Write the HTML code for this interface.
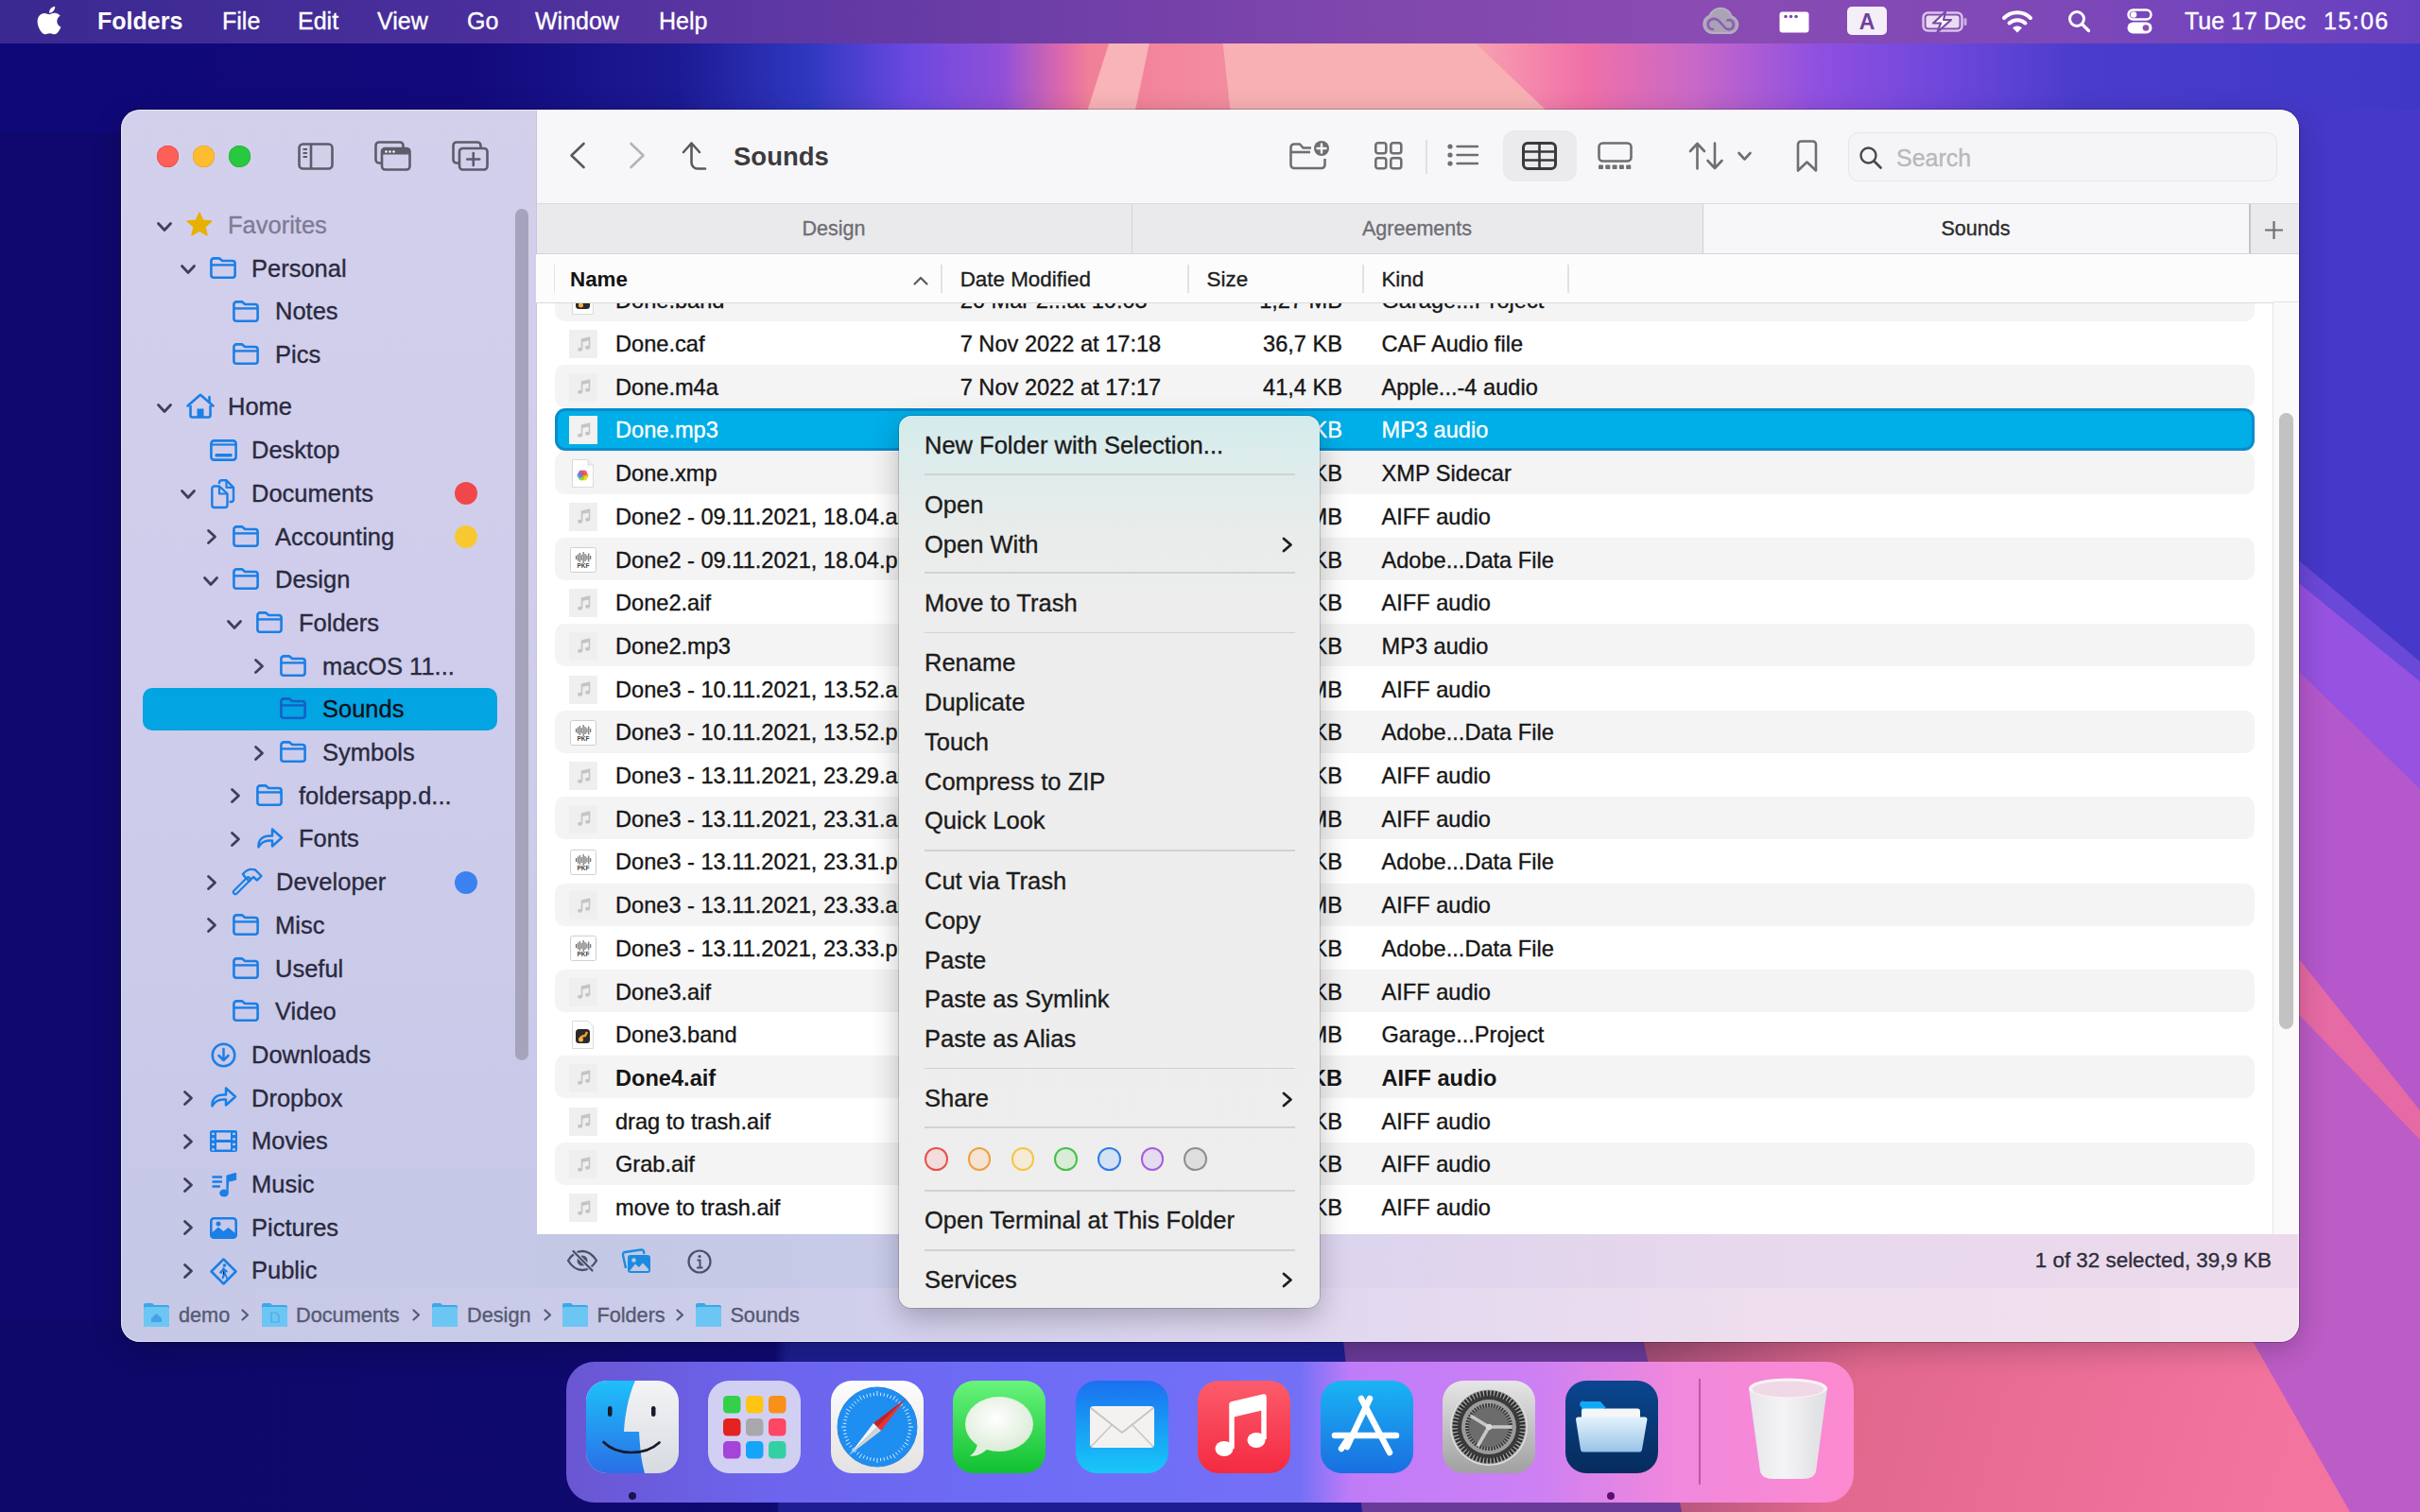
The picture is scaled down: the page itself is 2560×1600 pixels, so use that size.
<!DOCTYPE html>
<html><head><meta charset="utf-8"><style>
*{box-sizing:border-box;margin:0;padding:0}
html,body{width:2560px;height:1600px;overflow:hidden;background:#120a70;font-family:"Liberation Sans", sans-serif;position:relative}
.t{position:absolute;white-space:nowrap;line-height:1;-webkit-text-stroke:0.35px currentColor}
svg{position:absolute;overflow:visible}
</style></head>
<body>

<svg width="2560" height="1600" viewBox="0 0 2560 1600" style="left:0;top:0">
 <defs>
  <linearGradient id="wtop" x1="0" y1="0" x2="2560" y2="0" gradientUnits="userSpaceOnUse">
   <stop offset="0" stop-color="#0f0878"/>
   <stop offset="0.195" stop-color="#120a7c"/>
   <stop offset="0.28" stop-color="#1c1a94"/>
   <stop offset="0.335" stop-color="#3038c0"/>
   <stop offset="0.375" stop-color="#6a48e0"/>
   <stop offset="0.414" stop-color="#9050d8"/>
   <stop offset="0.44" stop-color="#e06aa8"/>
   <stop offset="0.45" stop-color="#f08098"/>
   <stop offset="0.51" stop-color="#f48ca0"/>
   <stop offset="0.61" stop-color="#f8a0b0"/>
   <stop offset="0.655" stop-color="#f070a8"/>
   <stop offset="0.70" stop-color="#c868c8"/>
   <stop offset="0.75" stop-color="#9050e0"/>
   <stop offset="0.80" stop-color="#7048dc"/>
   <stop offset="0.86" stop-color="#4a3ccc"/>
   <stop offset="1" stop-color="#3f38c6"/>
  </linearGradient>
  <linearGradient id="wbot" x1="0" y1="0" x2="2560" y2="0" gradientUnits="userSpaceOnUse">
   <stop offset="0" stop-color="#0e0868"/>
   <stop offset="0.32" stop-color="#0f0a70"/>
   <stop offset="0.325" stop-color="#1c1c8c"/>
   <stop offset="0.55" stop-color="#22228e"/>
  </linearGradient>
  <linearGradient id="wpink" x1="1730" y1="1420" x2="2400" y2="1600" gradientUnits="userSpaceOnUse">
   <stop offset="0" stop-color="#a04c74"/>
   <stop offset="0.35" stop-color="#e2688e"/>
   <stop offset="1" stop-color="#f474a0"/>
  </linearGradient>
  <filter id="blur1"><feGaussianBlur stdDeviation="6"/></filter>
 </defs>
 <rect x="0" y="0" width="2560" height="1600" fill="#10086e"/>
 <!-- top strip -->
 <rect x="0" y="0" width="2560" height="140" fill="url(#wtop)"/>
 <polygon points="1175,40 1217,40 1196,140 1143,140" fill="#f8b4b8"/>
 <polygon points="1293,40 1555,40 1660,140 1304,140" fill="#f8b0b4"/>
 <!-- right strip -->
 <rect x="2380" y="116" width="180" height="1484" fill="#4638c8"/>
 <polygon points="2380,550 2560,700 2560,1600 2380,1600" fill="#6a48d8"/>
 <polygon points="2380,575 2560,721 2560,1600 2380,1600" fill="#9652e0"/>
 <polygon points="2380,660 2560,835 2560,1600 2380,1600" fill="#b458cc"/>
 <polygon points="2380,950 2560,1175 2560,1600 2380,1600" fill="#e66aa4"/>
 <polygon points="2380,1020 2560,1206 2560,1600 2380,1600" fill="#bc5cc6"/>
 <!-- bottom strip -->
 <rect x="0" y="1400" width="2381" height="200" fill="url(#wbot)"/>
 <polygon points="838,1400 1419,1400 1441,1600 823,1600" fill="#1e1e90"/>
 <polygon points="1419,1400 1734,1400 1779,1600 1441,1600" fill="#6a3a98"/>
 <polygon points="1734,1400 2372,1400 2486,1600 1779,1600" fill="url(#wpink)"/>
 </svg>
<div style="position:absolute;left:0;top:0;width:2560px;height:46px;background:linear-gradient(90deg,#3a2990 0%,#4a2f9c 20%,#6a3ca6 40%,#7e46ac 55%,#8a4cb2 70%,#7e48b8 85%,#6640c0 100%)"></div><svg style="left:39px;top:6px" width="26" height="31" viewBox="0 20 384 470"><path d="M318.7 268.7c-.2-36.7 16.4-64.4 50-84.8-18.8-26.9-47.2-41.7-84.7-44.6-35.5-2.8-74.3 20.7-88.5 20.7-15 0-49.4-19.7-76.4-19.7C63.3 141.2 4 184.8 4 273.5q0 39.3 14.4 81.2c12.8 36.7 59 126.7 107.2 125.2 25.2-.6 43-17.9 75.8-17.9 31.8 0 48.3 17.9 76.4 17.9 48.6-.7 90.4-82.5 102.6-119.3-65.2-30.7-61.7-90-61.7-91.9zm-56.6-164.2c27.3-32.4 24.8-61.9 24-72.5-24.1 1.4-52 16.4-67.9 34.9-17.5 19.8-27.8 44.3-25.6 71.9 26.1 2 49.9-11.4 69.5-34.3z" fill="#fff"/></svg><div class="t" style="left:103.0px;top:9.8px;font-size:25px;color:#fff;font-weight:700;-webkit-text-stroke:0;">Folders</div><div class="t" style="left:235.0px;top:9.8px;font-size:25px;color:#fff;font-weight:400;">File</div><div class="t" style="left:315.0px;top:9.8px;font-size:25px;color:#fff;font-weight:400;">Edit</div><div class="t" style="left:399.0px;top:9.8px;font-size:25px;color:#fff;font-weight:400;">View</div><div class="t" style="left:494.0px;top:9.8px;font-size:25px;color:#fff;font-weight:400;">Go</div><div class="t" style="left:566.0px;top:9.8px;font-size:25px;color:#fff;font-weight:400;">Window</div><div class="t" style="left:697.0px;top:9.8px;font-size:25px;color:#fff;font-weight:400;">Help</div><div class="t" style="left:2311.0px;top:9.8px;font-size:25px;color:#fff;font-weight:400;">Tue 17 Dec</div><div class="t" style="left:2458.0px;top:9.8px;font-size:25px;color:#fff;font-weight:400;letter-spacing:1.4px">15:06</div><svg style="left:1801px;top:8px" width="39" height="28" viewBox="0 0 39 28"><path d="M10 27 A9.5 9.5 0 0 1 7.5 8.6 A12.5 12.5 0 0 1 31 9.5 A9 9 0 0 1 29.5 27 Z" fill="#a9a3b5" stroke="#b7afc6" stroke-width="2"/>
      <path d="M11 23 C5 23 4 15 9.5 12.5 C14 10.5 17 13.5 19.5 16.5 L23.5 21 C26 24 31 24 32.5 20 C34 16 30.5 12 26.5 13.5" fill="none" stroke="#8e5cb4" stroke-width="2.6" stroke-linecap="round"/></svg><svg style="left:1882px;top:12px" width="32" height="23" viewBox="0 0 32 23"><rect x="0.5" y="0.5" width="31" height="22" rx="3" fill="#fff"/><circle cx="7" cy="5.5" r="1.8" fill="#7a4ab0"/><circle cx="12.5" cy="5.5" r="1.8" fill="#7a4ab0"/><circle cx="18" cy="5.5" r="1.8" fill="#7a4ab0"/></svg><div style="position:absolute;left:1954px;top:7px;width:42px;height:30px;background:#f4eef8;border-radius:5px"></div><div class="t" style="left:1475.0px;width:1000px;text-align:center;top:11.5px;font-size:23px;color:#7040a0;font-weight:700;-webkit-text-stroke:0;">A</div><svg style="left:2033px;top:12px" width="49" height="22" viewBox="0 0 49 22"><rect x="1.5" y="1.5" width="41" height="19" rx="5" fill="none" stroke="#e8d8f0" stroke-width="2.5" opacity="0.85"/>
      <rect x="44.5" y="7" width="3" height="8" rx="1.5" fill="#e8d8f0" opacity="0.7"/>
      <rect x="4.5" y="4.5" width="35" height="13" rx="2.5" fill="#efe6f6" opacity="0.95"/>
      <path d="M25 0.5 L12 12.5 L20 12.5 L16.5 22 L31 9 L23 9 Z" fill="#fff" stroke="#7a48a8" stroke-width="2.2" stroke-linejoin="round"/></svg><svg style="left:2117px;top:10px" width="34" height="25" viewBox="0 0 34 25"><g fill="none" stroke="#fff" stroke-width="4" stroke-linecap="round">
      <path d="M3 9 A20 20 0 0 1 31 9"/><path d="M8.5 14.5 A12.5 12.5 0 0 1 25.5 14.5"/></g>
      <path d="M12 19.5 A7 7 0 0 1 22 19.5 L17 24.5 Z" fill="#fff"/></svg><svg style="left:2187px;top:10px" width="25" height="25" viewBox="0 0 25 25"><circle cx="10" cy="10" r="7.5" fill="none" stroke="#fff" stroke-width="3"/><path d="M15.5 15.5 L22.5 22.5" stroke="#fff" stroke-width="3.2" stroke-linecap="round"/></svg><svg style="left:2250px;top:9px" width="27" height="27" viewBox="0 0 27 27"><rect x="1.5" y="1.5" width="24" height="10" rx="5" fill="none" stroke="#fff" stroke-width="2.5"/>
      <circle cx="7" cy="6.5" r="3.3" fill="#fff"/>
      <rect x="0.5" y="14.5" width="26" height="12" rx="6" fill="#fff"/>
      <circle cx="20" cy="20.5" r="3.3" fill="#8a4cb2"/></svg><div style="position:absolute;left:128px;top:116px;width:2304px;height:1304px;border-radius:20px;box-shadow:0 8px 30px rgba(0,0,20,0.22),0 0 0 1px rgba(0,0,0,0.22)"></div><div id="win" style="position:absolute;left:128px;top:116px;width:2304px;height:1304px;border-radius:20px;overflow:hidden"><div style="position:absolute;left:0px;top:0px;width:440px;height:1247px;background:linear-gradient(180deg,#d3d0ec 0%,#cfcdeb 45%,#c6c8e8 100%)"></div><div style="position:absolute;left:0px;top:1247px;width:2304px;height:57px;background:linear-gradient(90deg,#c6c8e6 0%,#cacce9 25%,#ddd6f0 50%,#eedeee 75%,#f2e2ef 100%)"></div><div style="position:absolute;left:439px;top:1190px;width:1865px;height:57px;background:linear-gradient(90deg,#c3c8e5 0%,#cacbe9 30%,#dcd4ee 45%,#e8d8ec 70%,#ecdaec 100%)"></div><div style="position:absolute;left:439px;top:0px;width:1865px;height:100px;background:#f7f7f9;border-bottom:1px solid #dcdcde"></div><div style="position:absolute;left:439px;top:100px;width:1865px;height:53px;background:#eaeaed;border-bottom:1px solid #d6d6d8"></div><div style="position:absolute;left:1673px;top:100px;width:579px;height:52px;background:#f7f7f9"></div><div style="position:absolute;left:1069px;top:100px;width:1px;height:52px;background:#d4d4d6"></div><div style="position:absolute;left:1673px;top:100px;width:1px;height:52px;background:#d0d0d2"></div><div style="position:absolute;left:2251px;top:100px;width:2px;height:52px;background:#c4c4c6"></div><div style="position:absolute;left:439px;top:153px;width:1865px;height:51px;background:#fcfcfc;border-bottom:1px solid #e4e4e6"></div><div style="position:absolute;left:439px;top:204px;width:1865px;height:986px;background:#ffffff"></div><div style="position:absolute;left:2276px;top:204px;width:28px;height:986px;background:#fafafa;border-left:1px solid #e6e6e6"></div><div style="position:absolute;left:2283px;top:321px;width:15px;height:652px;background:#c2c2c2;border-radius:8px"></div><div style="position:absolute;left:439px;top:0px;width:1px;height:1190px;background:#c8c4dc"></div></div><div style="position:absolute;left:128px;top:116px;width:2304px;height:1304px;border-radius:20px;box-shadow:inset 0 0 0 1px rgba(255,255,255,0.45);pointer-events:none"></div><div style="position:absolute;left:165.5px;top:153.5px;width:23px;height:23px;border-radius:50%;background:#fe5f57;box-shadow:inset 0 0 0 0.5px #e0443e"></div><div style="position:absolute;left:203.5px;top:153.5px;width:23px;height:23px;border-radius:50%;background:#febc2e;box-shadow:inset 0 0 0 0.5px #dea123"></div><div style="position:absolute;left:241.5px;top:153.5px;width:23px;height:23px;border-radius:50%;background:#28c840;box-shadow:inset 0 0 0 0.5px #1aab29"></div><svg style="left:315px;top:151px" width="38" height="29" viewBox="0 0 38 29"><rect x="1.5" y="1.5" width="35" height="26" rx="4" fill="none" stroke="#5c5c6a" stroke-width="2.6"/>
      <path d="M14 1.5 V27.5" stroke="#5c5c6a" stroke-width="2.6"/>
      <path d="M5.5 7 H10 M5.5 11 H10 M5.5 15 H10" stroke="#5c5c6a" stroke-width="2"/></svg><svg style="left:395px;top:149px" width="40" height="32" viewBox="0 0 40 32"><path d="M9 23.5 H6 A3.5 3.5 0 0 1 2.5 20 V5 A3.5 3.5 0 0 1 6 1.5 H28 A3.5 3.5 0 0 1 31.5 5 V8" fill="none" stroke="#5c5c6a" stroke-width="2.6"/>
      <rect x="9" y="8" width="29.5" height="22.5" rx="3.5" fill="none" stroke="#5c5c6a" stroke-width="2.6"/>
      <path d="M9 12 A3.5 3.5 0 0 1 12.5 8.5 H35 A3.5 3.5 0 0 1 38.5 12 V14.5 H9 Z" fill="#5c5c6a"/>
      <circle cx="13.5" cy="11.5" r="1.3" fill="#f7f7f9"/><circle cx="17.5" cy="11.5" r="1.3" fill="#f7f7f9"/><circle cx="21.5" cy="11.5" r="1.3" fill="#f7f7f9"/></svg><svg style="left:477px;top:149px" width="40" height="32" viewBox="0 0 40 32"><path d="M9 23.5 H6 A3.5 3.5 0 0 1 2.5 20 V5 A3.5 3.5 0 0 1 6 1.5 H28 A3.5 3.5 0 0 1 31.5 5 V8" fill="none" stroke="#5c5c6a" stroke-width="2.6"/>
      <rect x="9" y="8" width="29.5" height="22.5" rx="3.5" fill="none" stroke="#5c5c6a" stroke-width="2.6"/>
      <path d="M23.75 13 V26 M17.25 19.5 H30.25" stroke="#5c5c6a" stroke-width="2.6" stroke-linecap="round"/></svg><svg style="left:601px;top:150px" width="20" height="30" viewBox="0 0 20 30"><path d="M16.5 2 L3.5 14.5 L16.5 27" fill="none" stroke="#5a5a5e" stroke-width="2.6" stroke-linecap="round" stroke-linejoin="round"/></svg><svg style="left:664px;top:150px" width="20" height="30" viewBox="0 0 20 30"><path d="M3.5 2 L16.5 14.5 L3.5 27" fill="none" stroke="#b4b4b8" stroke-width="2.6" stroke-linecap="round" stroke-linejoin="round"/></svg><svg style="left:721px;top:149px" width="28" height="32" viewBox="0 0 28 32"><path d="M2 12 L10.5 2.5 L19 12 M10.5 3 V23 A6.5 6.5 0 0 0 17 29.5 H25" fill="none" stroke="#5a5a5e" stroke-width="2.6" stroke-linecap="round" stroke-linejoin="round"/></svg><div class="t" style="left:776.0px;top:152.2px;font-size:27.5px;color:#3b3b3e;font-weight:700;-webkit-text-stroke:0;">Sounds</div><svg style="left:1364px;top:149px" width="44" height="31" viewBox="0 0 44 31"><path d="M23 7.5 H14.5 L11 3.5 H5 A3.5 3.5 0 0 0 1.5 7 V25.5 A3.5 3.5 0 0 0 5 29 H34 A3.5 3.5 0 0 0 37.5 25.5 V19" fill="none" stroke="#6e6e73" stroke-width="2.6" stroke-linejoin="round"/>
      <path d="M1.5 12 H22" stroke="#6e6e73" stroke-width="2.6"/>
      <circle cx="34" cy="8" r="8" fill="#6e6e73"/><path d="M34 3.5 V12.5 M29.5 8 H38.5" stroke="#f7f7f9" stroke-width="2.4" stroke-linecap="round"/></svg><svg style="left:1454px;top:150px" width="30" height="30" viewBox="0 0 30 30"><g fill="none" stroke="#6e6e73" stroke-width="2.6"><rect x="1.3" y="1.3" width="11" height="11" rx="2.5"/><rect x="17.3" y="1.3" width="11" height="11" rx="2.5"/><rect x="1.3" y="17.3" width="11" height="11" rx="2.5"/><rect x="17.3" y="17.3" width="11" height="11" rx="2.5"/></g></svg><div style="position:absolute;left:1508px;top:148px;width:1.5px;height:36px;background:#e0e0e2"></div><svg style="left:1531px;top:152px" width="34" height="24" viewBox="0 0 34 24"><g fill="#6e6e73"><circle cx="3" cy="3" r="2.6"/><circle cx="3" cy="12" r="2.6"/><circle cx="3" cy="21" r="2.6"/></g>
      <path d="M10.5 3 H32 M10.5 12 H32 M10.5 21 H32" stroke="#6e6e73" stroke-width="2.4" stroke-linecap="round"/></svg><div style="position:absolute;left:1590px;top:138px;width:78px;height:54px;background:#ebebed;border-radius:12px"></div><svg style="left:1610px;top:150px" width="37" height="30" viewBox="0 0 37 30"><rect x="1.5" y="1.5" width="34" height="27" rx="4.5" fill="none" stroke="#3a3a3c" stroke-width="3"/>
      <path d="M1.5 10.5 H35.5 M1.5 19.5 H35.5 M18.5 1.5 V28.5" stroke="#3a3a3c" stroke-width="2.6"/></svg><svg style="left:1690px;top:150px" width="37" height="30" viewBox="0 0 37 30"><rect x="1.5" y="1.5" width="34" height="19" rx="4" fill="none" stroke="#6e6e73" stroke-width="2.6"/>
      <g fill="#6e6e73"><rect x="1" y="24.5" width="5" height="4.5" rx="0.8"/><rect x="8.3" y="24.5" width="5" height="4.5" rx="0.8"/><rect x="15.6" y="24.5" width="5" height="4.5" rx="0.8"/><rect x="22.9" y="24.5" width="5" height="4.5" rx="0.8"/><rect x="30.2" y="24.5" width="5" height="4.5" rx="0.8"/></g></svg><svg style="left:1786px;top:150px" width="38" height="30" viewBox="0 0 38 30"><path d="M9.5 28.5 V2.5 M2 10 L9.5 2 L17 10 M28 1.5 V27.5 M20.5 20 L28 28 L35.5 20" fill="none" stroke="#6e6e73" stroke-width="2.6" stroke-linecap="round" stroke-linejoin="round"/></svg><svg style="left:1838px;top:160px" width="15" height="11" viewBox="0 0 15 11"><path d="M1.5 2 L7.5 8.5 L13.5 2" fill="none" stroke="#6e6e73" stroke-width="2.6" stroke-linecap="round" stroke-linejoin="round"/></svg><svg style="left:1900px;top:148px" width="23" height="35" viewBox="0 0 23 35"><path d="M2 32.5 V5 A3.5 3.5 0 0 1 5.5 1.5 H17.5 A3.5 3.5 0 0 1 21 5 V32.5 L11.5 23.5 Z" fill="none" stroke="#6e6e73" stroke-width="2.6" stroke-linejoin="round"/></svg><div style="position:absolute;left:1955px;top:140px;width:454px;height:52px;background:#f5f5f7;border:1px solid #e6e6e8;border-radius:11px"></div><svg style="left:1966px;top:154px" width="26" height="26" viewBox="0 0 26 26"><circle cx="10.5" cy="10.5" r="8" fill="none" stroke="#4a4a4e" stroke-width="2.4"/><path d="M16.5 16.5 L23.5 23.5" stroke="#4a4a4e" stroke-width="2.8" stroke-linecap="round"/></svg><div class="t" style="left:2006.0px;top:155.3px;font-size:25px;color:#b8b8bc;font-weight:400;">Search</div><div class="t" style="left:382.0px;width:1000px;text-align:center;top:231.8px;font-size:21.5px;color:#6e6e73;font-weight:400;">Design</div><div class="t" style="left:999.0px;width:1000px;text-align:center;top:231.8px;font-size:21.5px;color:#6e6e73;font-weight:400;">Agreements</div><div class="t" style="left:1590.0px;width:1000px;text-align:center;top:231.8px;font-size:21.5px;color:#2a2a2c;font-weight:400;">Sounds</div><svg style="left:2395px;top:233px" width="21" height="21" viewBox="0 0 21 21"><path d="M10.5 1 V20 M1 10.5 H20" stroke="#6e6e73" stroke-width="2.2"/></svg><svg style="left:165.5px;top:234.6px" width="16" height="11" viewBox="0 0 16 11"><path d="M1.5 1.5 L8 8.5 L14.5 1.5" fill="none" stroke="#3f3f5a" stroke-width="2.8" stroke-linecap="round" stroke-linejoin="round"/></svg><svg style="left:197px;top:224.1px" width="28" height="27" viewBox="0 0 28 27"><path d="M14 1.2 L17.6 9.3 L26.6 10.1 L19.8 16 L21.9 24.8 L14 20.1 L6.1 24.8 L8.2 16 L1.4 10.1 L10.4 9.3 Z" fill="#e8b000" stroke="#e8b000" stroke-width="1.6" stroke-linejoin="round"/></svg><div class="t" style="left:241.0px;top:226.0px;font-size:25.5px;color:#7c7c94;font-weight:400;">Favorites</div><svg style="left:190.5px;top:280.3px" width="16" height="11" viewBox="0 0 16 11"><path d="M1.5 1.5 L8 8.5 L14.5 1.5" fill="none" stroke="#3f3f5a" stroke-width="2.8" stroke-linecap="round" stroke-linejoin="round"/></svg><svg style="left:222px;top:271.8px" width="28" height="23" viewBox="0 0 28 23"><path d="M1.4 19 V4.2 A2.8 2.8 0 0 1 4.2 1.4 H10.2 L13.2 4 H23.8 A2.8 2.8 0 0 1 26.6 6.8 V19 A2.8 2.8 0 0 1 23.8 21.8 H4.2 A2.8 2.8 0 0 1 1.4 19 Z" fill="none" stroke="#1a7fe6" stroke-width="2.6" stroke-linejoin="round"/>
      <path d="M1.4 8.4 H26.6" stroke="#1a7fe6" stroke-width="2.4"/></svg><div class="t" style="left:266.0px;top:271.7px;font-size:25.5px;color:#2a2a3e;font-weight:400;">Personal</div><svg style="left:246px;top:317.5px" width="28" height="23" viewBox="0 0 28 23"><path d="M1.4 19 V4.2 A2.8 2.8 0 0 1 4.2 1.4 H10.2 L13.2 4 H23.8 A2.8 2.8 0 0 1 26.6 6.8 V19 A2.8 2.8 0 0 1 23.8 21.8 H4.2 A2.8 2.8 0 0 1 1.4 19 Z" fill="none" stroke="#1a7fe6" stroke-width="2.6" stroke-linejoin="round"/>
      <path d="M1.4 8.4 H26.6" stroke="#1a7fe6" stroke-width="2.4"/></svg><div class="t" style="left:291.0px;top:317.4px;font-size:25.5px;color:#2a2a3e;font-weight:400;">Notes</div><svg style="left:246px;top:363.2px" width="28" height="23" viewBox="0 0 28 23"><path d="M1.4 19 V4.2 A2.8 2.8 0 0 1 4.2 1.4 H10.2 L13.2 4 H23.8 A2.8 2.8 0 0 1 26.6 6.8 V19 A2.8 2.8 0 0 1 23.8 21.8 H4.2 A2.8 2.8 0 0 1 1.4 19 Z" fill="none" stroke="#1a7fe6" stroke-width="2.6" stroke-linejoin="round"/>
      <path d="M1.4 8.4 H26.6" stroke="#1a7fe6" stroke-width="2.4"/></svg><div class="t" style="left:291.0px;top:363.1px;font-size:25.5px;color:#2a2a3e;font-weight:400;">Pics</div><svg style="left:165.5px;top:427.0px" width="16" height="11" viewBox="0 0 16 11"><path d="M1.5 1.5 L8 8.5 L14.5 1.5" fill="none" stroke="#3f3f5a" stroke-width="2.8" stroke-linecap="round" stroke-linejoin="round"/></svg><svg style="left:197px;top:416.0px" width="30" height="27" viewBox="0 0 30 27"><path d="M4.5 13 V23.5 A2 2 0 0 0 6.5 25.5 H23.5 A2 2 0 0 0 25.5 23.5 V13" fill="none" stroke="#1a7fe6" stroke-width="2.6" stroke-linejoin="round"/>
      <path d="M1.5 13.5 L15 1.8 L28.5 13.5" fill="none" stroke="#1a7fe6" stroke-width="2.6" stroke-linecap="round" stroke-linejoin="round"/>
      <path d="M24.5 9 V4" stroke="#1a7fe6" stroke-width="2.6" stroke-linecap="round"/>
      <rect x="11.5" y="16.5" width="7" height="9" fill="#1a7fe6"/></svg><div class="t" style="left:241.0px;top:418.4px;font-size:25.5px;color:#2a2a3e;font-weight:400;">Home</div><svg style="left:222px;top:465.2px" width="29" height="23" viewBox="0 0 29 23"><rect x="1.4" y="1.4" width="26.2" height="20.2" rx="3" fill="none" stroke="#1a7fe6" stroke-width="2.6"/>
      <path d="M1.4 5.5 H27.6" stroke="#1a7fe6" stroke-width="2.2"/>
      <rect x="5.5" y="15" width="18" height="3.6" rx="1" fill="#1a7fe6"/></svg><div class="t" style="left:266.0px;top:464.1px;font-size:25.5px;color:#2a2a3e;font-weight:400;">Desktop</div><svg style="left:190.5px;top:518.4000000000001px" width="16" height="11" viewBox="0 0 16 11"><path d="M1.5 1.5 L8 8.5 L14.5 1.5" fill="none" stroke="#3f3f5a" stroke-width="2.8" stroke-linecap="round" stroke-linejoin="round"/></svg><svg style="left:223px;top:506.9000000000001px" width="26" height="31" viewBox="0 0 26 31"><path d="M9 5 V3.5 A2.5 2.5 0 0 1 11.5 1.3 H16.5 L24 8.8 V21.5 A2.5 2.5 0 0 1 21.5 24 H19.5" fill="none" stroke="#1a7fe6" stroke-width="2.4" stroke-linejoin="round"/>
      <path d="M16.5 1.3 V8.8 H24" fill="none" stroke="#1a7fe6" stroke-width="2.2" stroke-linejoin="round"/>
      <path d="M1.3 10 A2.5 2.5 0 0 1 3.8 7.5 H9 L17.5 15.5 V27.5 A2.5 2.5 0 0 1 15 30 H3.8 A2.5 2.5 0 0 1 1.3 27.5 Z" fill="#d2cfec" stroke="#1a7fe6" stroke-width="2.4" stroke-linejoin="round"/>
      <path d="M9 7.5 V15.5 H17.5" fill="none" stroke="#1a7fe6" stroke-width="2.2" stroke-linejoin="round"/></svg><div class="t" style="left:266.0px;top:509.8px;font-size:25.5px;color:#2a2a3e;font-weight:400;">Documents</div><div style="position:absolute;left:481px;top:510.4000000000001px;width:24px;height:24px;border-radius:50%;background:#f0484a"></div><svg style="left:218.5px;top:560.1000000000001px" width="11" height="16" viewBox="0 0 11 16"><path d="M1.5 1.5 L8.5 8 L1.5 14.5" fill="none" stroke="#3f3f5a" stroke-width="2.8" stroke-linecap="round" stroke-linejoin="round"/></svg><svg style="left:246px;top:555.6000000000001px" width="28" height="23" viewBox="0 0 28 23"><path d="M1.4 19 V4.2 A2.8 2.8 0 0 1 4.2 1.4 H10.2 L13.2 4 H23.8 A2.8 2.8 0 0 1 26.6 6.8 V19 A2.8 2.8 0 0 1 23.8 21.8 H4.2 A2.8 2.8 0 0 1 1.4 19 Z" fill="none" stroke="#1a7fe6" stroke-width="2.6" stroke-linejoin="round"/>
      <path d="M1.4 8.4 H26.6" stroke="#1a7fe6" stroke-width="2.4"/></svg><div class="t" style="left:291.0px;top:555.5px;font-size:25.5px;color:#2a2a3e;font-weight:400;">Accounting</div><div style="position:absolute;left:481px;top:556.1000000000001px;width:24px;height:24px;border-radius:50%;background:#f8c832"></div><svg style="left:215px;top:609.8000000000001px" width="16" height="11" viewBox="0 0 16 11"><path d="M1.5 1.5 L8 8.5 L14.5 1.5" fill="none" stroke="#3f3f5a" stroke-width="2.8" stroke-linecap="round" stroke-linejoin="round"/></svg><svg style="left:246px;top:601.3000000000001px" width="28" height="23" viewBox="0 0 28 23"><path d="M1.4 19 V4.2 A2.8 2.8 0 0 1 4.2 1.4 H10.2 L13.2 4 H23.8 A2.8 2.8 0 0 1 26.6 6.8 V19 A2.8 2.8 0 0 1 23.8 21.8 H4.2 A2.8 2.8 0 0 1 1.4 19 Z" fill="none" stroke="#1a7fe6" stroke-width="2.6" stroke-linejoin="round"/>
      <path d="M1.4 8.4 H26.6" stroke="#1a7fe6" stroke-width="2.4"/></svg><div class="t" style="left:291.0px;top:601.2px;font-size:25.5px;color:#2a2a3e;font-weight:400;">Design</div><svg style="left:240px;top:655.5px" width="16" height="11" viewBox="0 0 16 11"><path d="M1.5 1.5 L8 8.5 L14.5 1.5" fill="none" stroke="#3f3f5a" stroke-width="2.8" stroke-linecap="round" stroke-linejoin="round"/></svg><svg style="left:271px;top:647.0px" width="28" height="23" viewBox="0 0 28 23"><path d="M1.4 19 V4.2 A2.8 2.8 0 0 1 4.2 1.4 H10.2 L13.2 4 H23.8 A2.8 2.8 0 0 1 26.6 6.8 V19 A2.8 2.8 0 0 1 23.8 21.8 H4.2 A2.8 2.8 0 0 1 1.4 19 Z" fill="none" stroke="#1a7fe6" stroke-width="2.6" stroke-linejoin="round"/>
      <path d="M1.4 8.4 H26.6" stroke="#1a7fe6" stroke-width="2.4"/></svg><div class="t" style="left:316.0px;top:646.9px;font-size:25.5px;color:#2a2a3e;font-weight:400;">Folders</div><svg style="left:268.5px;top:697.2px" width="11" height="16" viewBox="0 0 11 16"><path d="M1.5 1.5 L8.5 8 L1.5 14.5" fill="none" stroke="#3f3f5a" stroke-width="2.8" stroke-linecap="round" stroke-linejoin="round"/></svg><svg style="left:296px;top:692.7px" width="28" height="23" viewBox="0 0 28 23"><path d="M1.4 19 V4.2 A2.8 2.8 0 0 1 4.2 1.4 H10.2 L13.2 4 H23.8 A2.8 2.8 0 0 1 26.6 6.8 V19 A2.8 2.8 0 0 1 23.8 21.8 H4.2 A2.8 2.8 0 0 1 1.4 19 Z" fill="none" stroke="#1a7fe6" stroke-width="2.6" stroke-linejoin="round"/>
      <path d="M1.4 8.4 H26.6" stroke="#1a7fe6" stroke-width="2.4"/></svg><div class="t" style="left:341.0px;top:692.6px;font-size:25.5px;color:#2a2a3e;font-weight:400;">macOS 11...</div><div style="position:absolute;left:150.5px;top:728.4000000000001px;width:375px;height:45px;background:#02a4e2;border-radius:10px"></div><svg style="left:296px;top:738.4000000000001px" width="28" height="23" viewBox="0 0 28 23"><path d="M1.4 19 V4.2 A2.8 2.8 0 0 1 4.2 1.4 H10.2 L13.2 4 H23.8 A2.8 2.8 0 0 1 26.6 6.8 V19 A2.8 2.8 0 0 1 23.8 21.8 H4.2 A2.8 2.8 0 0 1 1.4 19 Z" fill="none" stroke="#1560c8" stroke-width="2.6" stroke-linejoin="round"/>
      <path d="M1.4 8.4 H26.6" stroke="#1560c8" stroke-width="2.4"/></svg><div class="t" style="left:341.0px;top:738.3px;font-size:25.5px;color:#101018;font-weight:400;">Sounds</div><svg style="left:268.5px;top:788.6000000000001px" width="11" height="16" viewBox="0 0 11 16"><path d="M1.5 1.5 L8.5 8 L1.5 14.5" fill="none" stroke="#3f3f5a" stroke-width="2.8" stroke-linecap="round" stroke-linejoin="round"/></svg><svg style="left:296px;top:784.1000000000001px" width="28" height="23" viewBox="0 0 28 23"><path d="M1.4 19 V4.2 A2.8 2.8 0 0 1 4.2 1.4 H10.2 L13.2 4 H23.8 A2.8 2.8 0 0 1 26.6 6.8 V19 A2.8 2.8 0 0 1 23.8 21.8 H4.2 A2.8 2.8 0 0 1 1.4 19 Z" fill="none" stroke="#1a7fe6" stroke-width="2.6" stroke-linejoin="round"/>
      <path d="M1.4 8.4 H26.6" stroke="#1a7fe6" stroke-width="2.4"/></svg><div class="t" style="left:341.0px;top:784.0px;font-size:25.5px;color:#2a2a3e;font-weight:400;">Symbols</div><svg style="left:243.5px;top:834.3000000000001px" width="11" height="16" viewBox="0 0 11 16"><path d="M1.5 1.5 L8.5 8 L1.5 14.5" fill="none" stroke="#3f3f5a" stroke-width="2.8" stroke-linecap="round" stroke-linejoin="round"/></svg><svg style="left:271px;top:829.8000000000001px" width="28" height="23" viewBox="0 0 28 23"><path d="M1.4 19 V4.2 A2.8 2.8 0 0 1 4.2 1.4 H10.2 L13.2 4 H23.8 A2.8 2.8 0 0 1 26.6 6.8 V19 A2.8 2.8 0 0 1 23.8 21.8 H4.2 A2.8 2.8 0 0 1 1.4 19 Z" fill="none" stroke="#1a7fe6" stroke-width="2.6" stroke-linejoin="round"/>
      <path d="M1.4 8.4 H26.6" stroke="#1a7fe6" stroke-width="2.4"/></svg><div class="t" style="left:316.0px;top:829.7px;font-size:25.5px;color:#2a2a3e;font-weight:400;">foldersapp.d...</div><svg style="left:243.5px;top:880.0px" width="11" height="16" viewBox="0 0 11 16"><path d="M1.5 1.5 L8.5 8 L1.5 14.5" fill="none" stroke="#3f3f5a" stroke-width="2.8" stroke-linecap="round" stroke-linejoin="round"/></svg><svg style="left:271px;top:874.0px" width="29" height="25" viewBox="0 0 29 25"><path d="M2.5 22.5 C2 14 7 10.5 15 10.5 H17 V3.5 L27 12.5 L17 21.5 V15.5 H14 C8.5 15.5 5 18 2.5 22.5 Z" fill="none" stroke="#1a7fe6" stroke-width="2.5" stroke-linejoin="round"/></svg><div class="t" style="left:316.0px;top:875.4px;font-size:25.5px;color:#2a2a3e;font-weight:400;">Fonts</div><svg style="left:218.5px;top:925.7px" width="11" height="16" viewBox="0 0 11 16"><path d="M1.5 1.5 L8.5 8 L1.5 14.5" fill="none" stroke="#3f3f5a" stroke-width="2.8" stroke-linecap="round" stroke-linejoin="round"/></svg><svg style="left:246px;top:918.2px" width="32" height="29" viewBox="0 0 32 29"><path d="M3 26 L16.5 12.5" stroke="#1a7fe6" stroke-width="6.5" stroke-linecap="round"/>
      <path d="M3 26 L16.5 12.5" stroke="#d0cdea" stroke-width="2" stroke-linecap="round"/>
      <path d="M11 7 C14 3 19 1 24 2.5 L30.5 9 L26 13.5 L22 10 L17.5 14.5 L13.5 10.5 Z" fill="none" stroke="#1a7fe6" stroke-width="2.4" stroke-linejoin="round"/></svg><div class="t" style="left:292.0px;top:921.1px;font-size:25.5px;color:#2a2a3e;font-weight:400;">Developer</div><div style="position:absolute;left:481px;top:921.7px;width:24px;height:24px;border-radius:50%;background:#3b82f0"></div><svg style="left:218.5px;top:971.4000000000001px" width="11" height="16" viewBox="0 0 11 16"><path d="M1.5 1.5 L8.5 8 L1.5 14.5" fill="none" stroke="#3f3f5a" stroke-width="2.8" stroke-linecap="round" stroke-linejoin="round"/></svg><svg style="left:246px;top:966.9000000000001px" width="28" height="23" viewBox="0 0 28 23"><path d="M1.4 19 V4.2 A2.8 2.8 0 0 1 4.2 1.4 H10.2 L13.2 4 H23.8 A2.8 2.8 0 0 1 26.6 6.8 V19 A2.8 2.8 0 0 1 23.8 21.8 H4.2 A2.8 2.8 0 0 1 1.4 19 Z" fill="none" stroke="#1a7fe6" stroke-width="2.6" stroke-linejoin="round"/>
      <path d="M1.4 8.4 H26.6" stroke="#1a7fe6" stroke-width="2.4"/></svg><div class="t" style="left:291.0px;top:966.8px;font-size:25.5px;color:#2a2a3e;font-weight:400;">Misc</div><svg style="left:246px;top:1012.6000000000001px" width="28" height="23" viewBox="0 0 28 23"><path d="M1.4 19 V4.2 A2.8 2.8 0 0 1 4.2 1.4 H10.2 L13.2 4 H23.8 A2.8 2.8 0 0 1 26.6 6.8 V19 A2.8 2.8 0 0 1 23.8 21.8 H4.2 A2.8 2.8 0 0 1 1.4 19 Z" fill="none" stroke="#1a7fe6" stroke-width="2.6" stroke-linejoin="round"/>
      <path d="M1.4 8.4 H26.6" stroke="#1a7fe6" stroke-width="2.4"/></svg><div class="t" style="left:291.0px;top:1012.5px;font-size:25.5px;color:#2a2a3e;font-weight:400;">Useful</div><svg style="left:246px;top:1058.3000000000002px" width="28" height="23" viewBox="0 0 28 23"><path d="M1.4 19 V4.2 A2.8 2.8 0 0 1 4.2 1.4 H10.2 L13.2 4 H23.8 A2.8 2.8 0 0 1 26.6 6.8 V19 A2.8 2.8 0 0 1 23.8 21.8 H4.2 A2.8 2.8 0 0 1 1.4 19 Z" fill="none" stroke="#1a7fe6" stroke-width="2.6" stroke-linejoin="round"/>
      <path d="M1.4 8.4 H26.6" stroke="#1a7fe6" stroke-width="2.4"/></svg><div class="t" style="left:291.0px;top:1058.2px;font-size:25.5px;color:#2a2a3e;font-weight:400;">Video</div><svg style="left:223px;top:1103.0px" width="27" height="27" viewBox="0 0 27 27"><circle cx="13.5" cy="13.5" r="11.8" fill="none" stroke="#1a7fe6" stroke-width="2.5"/>
      <path d="M13.5 7 V19 M8.5 14 L13.5 19 L18.5 14" fill="none" stroke="#1a7fe6" stroke-width="2.5" stroke-linecap="round" stroke-linejoin="round"/></svg><div class="t" style="left:266.0px;top:1103.9px;font-size:25.5px;color:#2a2a3e;font-weight:400;">Downloads</div><svg style="left:194.0px;top:1154.2px" width="11" height="16" viewBox="0 0 11 16"><path d="M1.5 1.5 L8.5 8 L1.5 14.5" fill="none" stroke="#3f3f5a" stroke-width="2.8" stroke-linecap="round" stroke-linejoin="round"/></svg><svg style="left:222px;top:1148.2px" width="29" height="25" viewBox="0 0 29 25"><path d="M2.5 22.5 C2 14 7 10.5 15 10.5 H17 V3.5 L27 12.5 L17 21.5 V15.5 H14 C8.5 15.5 5 18 2.5 22.5 Z" fill="none" stroke="#1a7fe6" stroke-width="2.5" stroke-linejoin="round"/></svg><div class="t" style="left:266.0px;top:1149.6px;font-size:25.5px;color:#2a2a3e;font-weight:400;">Dropbox</div><svg style="left:194.0px;top:1199.9px" width="11" height="16" viewBox="0 0 11 16"><path d="M1.5 1.5 L8.5 8 L1.5 14.5" fill="none" stroke="#3f3f5a" stroke-width="2.8" stroke-linecap="round" stroke-linejoin="round"/></svg><svg style="left:222px;top:1196.4px" width="29" height="23" viewBox="0 0 29 23"><rect x="0" y="0" width="29" height="23" rx="2.5" fill="#1a7fe6"/><rect x="7" y="2.5" width="15" height="7.5" fill="#cbcbe9"/><rect x="7" y="13" width="15" height="7.5" fill="#cbcbe9"/><rect x="2.2" y="2.8" width="2.6" height="2.2" fill="#cbcbe9"/><rect x="24.2" y="2.8" width="2.6" height="2.2" fill="#cbcbe9"/><rect x="2.2" y="8.3" width="2.6" height="2.2" fill="#cbcbe9"/><rect x="24.2" y="8.3" width="2.6" height="2.2" fill="#cbcbe9"/><rect x="2.2" y="13.8" width="2.6" height="2.2" fill="#cbcbe9"/><rect x="24.2" y="13.8" width="2.6" height="2.2" fill="#cbcbe9"/><rect x="2.2" y="19.3" width="2.6" height="2.2" fill="#cbcbe9"/><rect x="24.2" y="19.3" width="2.6" height="2.2" fill="#cbcbe9"/></svg><div class="t" style="left:266.0px;top:1195.3px;font-size:25.5px;color:#2a2a3e;font-weight:400;">Movies</div><svg style="left:194.0px;top:1245.6000000000001px" width="11" height="16" viewBox="0 0 11 16"><path d="M1.5 1.5 L8.5 8 L1.5 14.5" fill="none" stroke="#3f3f5a" stroke-width="2.8" stroke-linecap="round" stroke-linejoin="round"/></svg><svg style="left:223px;top:1240.6000000000001px" width="27" height="26" viewBox="0 0 27 26"><path d="M1.5 4.5 H12 M1.5 9.5 H12 M1.5 14.5 H10" stroke="#1a7fe6" stroke-width="2.3"/>
      <path d="M17.5 21 V3.5 L26 1.2 V6.8 L19.5 8.5" fill="#1a7fe6" stroke="#1a7fe6" stroke-width="2.3" stroke-linejoin="round"/>
      <ellipse cx="14" cy="21.5" rx="4.8" ry="4" fill="#1a7fe6"/></svg><div class="t" style="left:266.0px;top:1241.0px;font-size:25.5px;color:#2a2a3e;font-weight:400;">Music</div><svg style="left:194.0px;top:1291.3000000000002px" width="11" height="16" viewBox="0 0 11 16"><path d="M1.5 1.5 L8.5 8 L1.5 14.5" fill="none" stroke="#3f3f5a" stroke-width="2.8" stroke-linecap="round" stroke-linejoin="round"/></svg><svg style="left:222px;top:1287.8000000000002px" width="29" height="23" viewBox="0 0 29 23"><rect x="1.3" y="1.3" width="26.4" height="20.4" rx="3" fill="none" stroke="#1a7fe6" stroke-width="2.6"/>
      <path d="M1.5 20 L1.5 17 L9 10.5 L14.5 15 L19.5 11 L27.5 17.5 V20 A2 2 0 0 1 25.5 22 H3.5 Z" fill="#1a7fe6"/>
      <circle cx="9" cy="7" r="2.5" fill="#1a7fe6"/></svg><div class="t" style="left:266.0px;top:1286.7px;font-size:25.5px;color:#2a2a3e;font-weight:400;">Pictures</div><svg style="left:194.0px;top:1337.0px" width="11" height="16" viewBox="0 0 11 16"><path d="M1.5 1.5 L8.5 8 L1.5 14.5" fill="none" stroke="#3f3f5a" stroke-width="2.8" stroke-linecap="round" stroke-linejoin="round"/></svg><svg style="left:222px;top:1330.5px" width="29" height="29" viewBox="0 0 29 29"><path d="M14.5 1.5 L27.5 14.5 L14.5 27.5 L1.5 14.5 Z" fill="none" stroke="#1a7fe6" stroke-width="2.5" stroke-linejoin="round"/>
      <circle cx="15.5" cy="8" r="1.8" fill="#1a7fe6"/>
      <path d="M14.5 11 L12 16 M14.5 11 L16 16.5 L13.5 21.5 M16 16.5 L18 21.5 M13.5 13 L11 15.5 M15 12 L18 14.5" stroke="#1a7fe6" stroke-width="1.8" stroke-linecap="round"/></svg><div class="t" style="left:266.0px;top:1332.4px;font-size:25.5px;color:#2a2a3e;font-weight:400;">Public</div><div style="position:absolute;left:545px;top:221px;width:14px;height:901px;background:#a6a4bc;border-radius:7px"></div><svg style="left:151px;top:1378px" width="29" height="27" viewBox="0 0 29 27"><path d="M1 3 A2 2 0 0 1 3 1 H10 L12 3 H26 A2 2 0 0 1 28 5 V24 A2 2 0 0 1 26 26 H3 A2 2 0 0 1 1 24 Z" fill="#3aa8e8"/>
          <path d="M1 7 A2 2 0 0 1 3 5 H26 A2 2 0 0 1 28 7 V24 A2 2 0 0 1 26 26 H3 A2 2 0 0 1 1 24 Z" fill="#6cc6f4"/><path d="M9 17 L14.5 12 L20 17 V21 H9 Z" fill="#3a9ae0" opacity="0.8"/></svg><div class="t" style="left:189.0px;top:1380.6px;font-size:21.7px;color:#555a72;font-weight:400;">demo</div><svg style="left:275.6px;top:1378px" width="29" height="27" viewBox="0 0 29 27"><path d="M1 3 A2 2 0 0 1 3 1 H10 L12 3 H26 A2 2 0 0 1 28 5 V24 A2 2 0 0 1 26 26 H3 A2 2 0 0 1 1 24 Z" fill="#3aa8e8"/>
          <path d="M1 7 A2 2 0 0 1 3 5 H26 A2 2 0 0 1 28 7 V24 A2 2 0 0 1 26 26 H3 A2 2 0 0 1 1 24 Z" fill="#6cc6f4"/><path d="M11 11 H16 L19 14 V21 H11 Z" fill="none" stroke="#4aa8e8" stroke-width="1.2"/></svg><div class="t" style="left:313.0px;top:1380.6px;font-size:21.7px;color:#555a72;font-weight:400;">Documents</div><svg style="left:456px;top:1378px" width="29" height="27" viewBox="0 0 29 27"><path d="M1 3 A2 2 0 0 1 3 1 H10 L12 3 H26 A2 2 0 0 1 28 5 V24 A2 2 0 0 1 26 26 H3 A2 2 0 0 1 1 24 Z" fill="#3aa8e8"/>
          <path d="M1 7 A2 2 0 0 1 3 5 H26 A2 2 0 0 1 28 7 V24 A2 2 0 0 1 26 26 H3 A2 2 0 0 1 1 24 Z" fill="#6cc6f4"/></svg><div class="t" style="left:494.0px;top:1380.6px;font-size:21.7px;color:#555a72;font-weight:400;">Design</div><svg style="left:594px;top:1378px" width="29" height="27" viewBox="0 0 29 27"><path d="M1 3 A2 2 0 0 1 3 1 H10 L12 3 H26 A2 2 0 0 1 28 5 V24 A2 2 0 0 1 26 26 H3 A2 2 0 0 1 1 24 Z" fill="#3aa8e8"/>
          <path d="M1 7 A2 2 0 0 1 3 5 H26 A2 2 0 0 1 28 7 V24 A2 2 0 0 1 26 26 H3 A2 2 0 0 1 1 24 Z" fill="#6cc6f4"/></svg><div class="t" style="left:631.4px;top:1380.6px;font-size:21.7px;color:#555a72;font-weight:400;">Folders</div><svg style="left:735px;top:1378px" width="29" height="27" viewBox="0 0 29 27"><path d="M1 3 A2 2 0 0 1 3 1 H10 L12 3 H26 A2 2 0 0 1 28 5 V24 A2 2 0 0 1 26 26 H3 A2 2 0 0 1 1 24 Z" fill="#3aa8e8"/>
          <path d="M1 7 A2 2 0 0 1 3 5 H26 A2 2 0 0 1 28 7 V24 A2 2 0 0 1 26 26 H3 A2 2 0 0 1 1 24 Z" fill="#6cc6f4"/></svg><div class="t" style="left:772.4px;top:1380.6px;font-size:21.7px;color:#555a72;font-weight:400;">Sounds</div><svg style="left:255px;top:1385px" width="9" height="13" viewBox="0 0 9 13"><path d="M1.5 1.5 L7 6.5 L1.5 11.5" fill="none" stroke="#555a72" stroke-width="2.2" stroke-linecap="round" stroke-linejoin="round"/></svg><svg style="left:436px;top:1385px" width="9" height="13" viewBox="0 0 9 13"><path d="M1.5 1.5 L7 6.5 L1.5 11.5" fill="none" stroke="#555a72" stroke-width="2.2" stroke-linecap="round" stroke-linejoin="round"/></svg><svg style="left:574.5px;top:1385px" width="9" height="13" viewBox="0 0 9 13"><path d="M1.5 1.5 L7 6.5 L1.5 11.5" fill="none" stroke="#555a72" stroke-width="2.2" stroke-linecap="round" stroke-linejoin="round"/></svg><svg style="left:714.5px;top:1385px" width="9" height="13" viewBox="0 0 9 13"><path d="M1.5 1.5 L7 6.5 L1.5 11.5" fill="none" stroke="#555a72" stroke-width="2.2" stroke-linecap="round" stroke-linejoin="round"/></svg><svg style="left:599px;top:1322px" width="34" height="24" viewBox="0 0 34 24"><path d="M2 12 C7 4 12 2 17 2 C22 2 27 4 32 12 C27 20 22 22 17 22 C12 22 7 20 2 12 Z" fill="none" stroke="#4b5068" stroke-width="2.3"/>
       <circle cx="17" cy="12" r="5.5" fill="#4b5068"/>
       <path d="M7 1.5 L28 23" stroke="#c3c8e4" stroke-width="4.5"/><path d="M7.5 2 L27.5 22.5" stroke="#4b5068" stroke-width="2.3" stroke-linecap="round"/></svg><svg style="left:657px;top:1321px" width="32" height="27" viewBox="0 0 32 27"><path d="M5 21 L2 7 A2.5 2.5 0 0 1 4 4 L21 1.5 A2.5 2.5 0 0 1 24 3.5 L24.5 6" fill="none" stroke="#1a8ce0" stroke-width="2.4"/>
       <rect x="7" y="7" width="24" height="19" rx="3" fill="#1a8ce0"/>
       <path d="M9 24 L15 16.5 L19 20 L23 15.5 L29 22 V24 Z" fill="#c3c8e4"/>
       <circle cx="13.5" cy="12.5" r="2.2" fill="#c3c8e4"/></svg><svg style="left:727px;top:1322px" width="26" height="26" viewBox="0 0 26 26"><circle cx="13" cy="13" r="11.5" fill="none" stroke="#4b5068" stroke-width="2.2"/>
       <circle cx="13" cy="7.5" r="1.6" fill="#4b5068"/>
       <path d="M10.5 11.5 H13.5 V19 M10 19.5 H16.5" fill="none" stroke="#4b5068" stroke-width="2"/></svg><div class="t" style="right:157.0px;top:1323.0px;font-size:22.4px;color:#2e2e3a;font-weight:400;">1 of 32 selected, 39,9 KB</div><div style="position:absolute;left:567px;top:320px;width:1838px;height:986px;overflow:hidden"><div style="position:absolute;left:20px;top:-25.19999999999999px;width:1798px;height:45px;background:#f4f4f5;border-radius:10px"></div><div style="position:absolute;left:20px;top:66.20000000000005px;width:1798px;height:45px;background:#f4f4f5;border-radius:10px"></div><div style="position:absolute;left:20px;top:111.65000000000003px;width:1798px;height:45.5px;background:#00aee8;border:3px solid #0a8bcc;border-radius:11px"></div><div style="position:absolute;left:20px;top:157.60000000000002px;width:1798px;height:45px;background:#f4f4f5;border-radius:10px"></div><div style="position:absolute;left:20px;top:249.0px;width:1798px;height:45px;background:#f4f4f5;border-radius:10px"></div><div style="position:absolute;left:20px;top:340.4000000000001px;width:1798px;height:45px;background:#f4f4f5;border-radius:10px"></div><div style="position:absolute;left:20px;top:431.79999999999995px;width:1798px;height:45px;background:#f4f4f5;border-radius:10px"></div><div style="position:absolute;left:20px;top:523.2px;width:1798px;height:45px;background:#f4f4f5;border-radius:10px"></div><div style="position:absolute;left:20px;top:614.6000000000001px;width:1798px;height:45px;background:#f4f4f5;border-radius:10px"></div><div style="position:absolute;left:20px;top:706.0px;width:1798px;height:45px;background:#f4f4f5;border-radius:10px"></div><div style="position:absolute;left:20px;top:797.4000000000001px;width:1798px;height:45px;background:#f4f4f5;border-radius:10px"></div><div style="position:absolute;left:20px;top:888.8px;width:1798px;height:45px;background:#f4f4f5;border-radius:10px"></div></div><div style="position:absolute;left:567px;top:320px;width:1838px;height:986px;overflow:hidden"><div style="position:absolute;left:-567px;top:-320px;width:2560px;height:1600px"><svg style="left:605px;top:303.3px" width="23" height="30" viewBox="0 0 23 30"><path d="M0.5 0.5 H17 L22.5 6 V29.5 H0.5 Z" fill="#fff" stroke="#dadada"/><rect x="4" y="9" width="15" height="15" rx="3.5" fill="#2a2a2a"/><path d="M8 21 C9 17 12 16 14 16 L16 12" stroke="#f0a030" stroke-width="2.5" fill="none"/><circle cx="9.5" cy="20" r="2.5" fill="#f5b040"/></svg><div style="position:absolute;left:650px;top:287.3px;width:340px;height:60px;overflow:hidden"><div class="t" style="left:1.0px;top:20.0px;font-size:23.6px;color:#161616;font-weight:400;">Done.band</div></div><div class="t" style="left:1015.7px;top:307.3px;font-size:23.6px;color:#161616;font-weight:400;">26 Mar 2...at 10:03</div><div class="t" style="right:1140.0px;top:307.3px;font-size:23.6px;color:#161616;font-weight:400;">1,27 MB</div><div class="t" style="left:1461.5px;top:307.3px;font-size:23.6px;color:#161616;font-weight:400;">Garage...Project</div><div style="position:absolute;left:602px;top:349.0px;width:30px;height:30px;background:#efefef"></div><svg style="left:609.5px;top:355.5px" width="15" height="16" viewBox="0 0 15 16"><path d="M5.5 13.5 V3.2 L13.5 1.3 V11.5" fill="none" stroke="#c4c4c4" stroke-width="1.6"/><path d="M5.5 4.8 L13.5 2.9" stroke="#c4c4c4" stroke-width="2.6"/><ellipse cx="3.6" cy="13.8" rx="2.6" ry="2" fill="#c4c4c4"/><ellipse cx="11.6" cy="11.8" rx="2.6" ry="2" fill="#c4c4c4"/></svg><div style="position:absolute;left:650px;top:333.0px;width:340px;height:60px;overflow:hidden"><div class="t" style="left:1.0px;top:20.0px;font-size:23.6px;color:#161616;font-weight:400;">Done.caf</div></div><div class="t" style="left:1015.7px;top:353.0px;font-size:23.6px;color:#161616;font-weight:400;">7 Nov 2022 at 17:18</div><div class="t" style="right:1140.0px;top:353.0px;font-size:23.6px;color:#161616;font-weight:400;">36,7 KB</div><div class="t" style="left:1461.5px;top:353.0px;font-size:23.6px;color:#161616;font-weight:400;">CAF Audio file</div><div style="position:absolute;left:602px;top:394.70000000000005px;width:30px;height:30px;background:#efefef"></div><svg style="left:609.5px;top:401.20000000000005px" width="15" height="16" viewBox="0 0 15 16"><path d="M5.5 13.5 V3.2 L13.5 1.3 V11.5" fill="none" stroke="#c4c4c4" stroke-width="1.6"/><path d="M5.5 4.8 L13.5 2.9" stroke="#c4c4c4" stroke-width="2.6"/><ellipse cx="3.6" cy="13.8" rx="2.6" ry="2" fill="#c4c4c4"/><ellipse cx="11.6" cy="11.8" rx="2.6" ry="2" fill="#c4c4c4"/></svg><div style="position:absolute;left:650px;top:378.7px;width:340px;height:60px;overflow:hidden"><div class="t" style="left:1.0px;top:20.0px;font-size:23.6px;color:#161616;font-weight:400;">Done.m4a</div></div><div class="t" style="left:1015.7px;top:398.7px;font-size:23.6px;color:#161616;font-weight:400;">7 Nov 2022 at 17:17</div><div class="t" style="right:1140.0px;top:398.7px;font-size:23.6px;color:#161616;font-weight:400;">41,4 KB</div><div class="t" style="left:1461.5px;top:398.7px;font-size:23.6px;color:#161616;font-weight:400;">Apple...-4 audio</div><div style="position:absolute;left:602px;top:440.40000000000003px;width:30px;height:30px;background:#f2f2f2"></div><svg style="left:609.5px;top:446.90000000000003px" width="15" height="16" viewBox="0 0 15 16"><path d="M5.5 13.5 V3.2 L13.5 1.3 V11.5" fill="none" stroke="#c4c4c4" stroke-width="1.6"/><path d="M5.5 4.8 L13.5 2.9" stroke="#c4c4c4" stroke-width="2.6"/><ellipse cx="3.6" cy="13.8" rx="2.6" ry="2" fill="#c4c4c4"/><ellipse cx="11.6" cy="11.8" rx="2.6" ry="2" fill="#c4c4c4"/></svg><div style="position:absolute;left:650px;top:424.4px;width:340px;height:60px;overflow:hidden"><div class="t" style="left:1.0px;top:20.0px;font-size:23.6px;color:#ffffff;font-weight:400;">Done.mp3</div></div><div class="t" style="left:1015.7px;top:444.4px;font-size:23.6px;color:#ffffff;font-weight:400;">7 Nov 2022 at 17:17</div><div class="t" style="right:1140.0px;top:444.4px;font-size:23.6px;color:#ffffff;font-weight:400;">39,9 KB</div><div class="t" style="left:1461.5px;top:444.4px;font-size:23.6px;color:#ffffff;font-weight:400;">MP3 audio</div><svg style="left:605px;top:486.1px" width="23" height="30" viewBox="0 0 23 30"><path d="M0.5 0.5 H17 L22.5 6 V29.5 H0.5 Z" fill="#fff" stroke="#dadada"/><path d="M17 0.5 V6 H22.5" fill="#eee" stroke="#dadada"/><ellipse cx="14.50" cy="17.00" rx="3" ry="3" fill="#f5a623" opacity="0.85"/><ellipse cx="13.00" cy="19.60" rx="3" ry="3" fill="#f8d000" opacity="0.85"/><ellipse cx="10.00" cy="19.60" rx="3" ry="3" fill="#7ed321" opacity="0.85"/><ellipse cx="8.50" cy="17.00" rx="3" ry="3" fill="#4a90e2" opacity="0.85"/><ellipse cx="10.00" cy="14.40" rx="3" ry="3" fill="#9b59b6" opacity="0.85"/><ellipse cx="13.00" cy="14.40" rx="3" ry="3" fill="#e94b6a" opacity="0.85"/></svg><div style="position:absolute;left:650px;top:470.1px;width:340px;height:60px;overflow:hidden"><div class="t" style="left:1.0px;top:20.0px;font-size:23.6px;color:#161616;font-weight:400;">Done.xmp</div></div><div class="t" style="left:1015.7px;top:490.1px;font-size:23.6px;color:#161616;font-weight:400;">7 Nov 2022 at 17:17</div><div class="t" style="right:1140.0px;top:490.1px;font-size:23.6px;color:#161616;font-weight:400;">4 KB</div><div class="t" style="left:1461.5px;top:490.1px;font-size:23.6px;color:#161616;font-weight:400;">XMP Sidecar</div><div style="position:absolute;left:602px;top:531.8px;width:30px;height:30px;background:#efefef"></div><svg style="left:609.5px;top:538.3px" width="15" height="16" viewBox="0 0 15 16"><path d="M5.5 13.5 V3.2 L13.5 1.3 V11.5" fill="none" stroke="#c4c4c4" stroke-width="1.6"/><path d="M5.5 4.8 L13.5 2.9" stroke="#c4c4c4" stroke-width="2.6"/><ellipse cx="3.6" cy="13.8" rx="2.6" ry="2" fill="#c4c4c4"/><ellipse cx="11.6" cy="11.8" rx="2.6" ry="2" fill="#c4c4c4"/></svg><div style="position:absolute;left:650px;top:515.8px;width:340px;height:60px;overflow:hidden"><div class="t" style="left:1.0px;top:20.0px;font-size:23.6px;color:#161616;font-weight:400;">Done2 - 09.11.2021, 18.04.aif</div></div><div class="t" style="left:1015.7px;top:535.8px;font-size:23.6px;color:#161616;font-weight:400;">9 Nov 2021 at 18:04</div><div class="t" style="right:1140.0px;top:535.8px;font-size:23.6px;color:#161616;font-weight:400;">1,2 MB</div><div class="t" style="left:1461.5px;top:535.8px;font-size:23.6px;color:#161616;font-weight:400;">AIFF audio</div><svg style="left:603px;top:579.0px" width="28" height="27" viewBox="0 0 28 27"><rect x="0.5" y="0.5" width="27" height="26" rx="2" fill="#fff" stroke="#cfcfcf"/><rect x="6.0" y="9.0" width="1" height="4" fill="#555"/><rect x="7.9" y="7.5" width="1" height="7" fill="#555"/><rect x="9.8" y="6.0" width="1" height="10" fill="#555"/><rect x="11.7" y="8.0" width="1" height="6" fill="#555"/><rect x="13.6" y="5.0" width="1" height="12" fill="#555"/><rect x="15.5" y="7.0" width="1" height="8" fill="#555"/><rect x="17.4" y="8.5" width="1" height="5" fill="#555"/><rect x="19.3" y="6.5" width="1" height="9" fill="#555"/><rect x="21.2" y="9.0" width="1" height="4" fill="#555"/><text x="14" y="22" font-size="6.5" font-family="Liberation Sans" font-weight="700" text-anchor="middle" fill="#444">PKF</text></svg><div style="position:absolute;left:650px;top:561.5px;width:340px;height:60px;overflow:hidden"><div class="t" style="left:1.0px;top:20.0px;font-size:23.6px;color:#161616;font-weight:400;">Done2 - 09.11.2021, 18.04.pkf</div></div><div class="t" style="left:1015.7px;top:581.5px;font-size:23.6px;color:#161616;font-weight:400;">9 Nov 2021 at 18:04</div><div class="t" style="right:1140.0px;top:581.5px;font-size:23.6px;color:#161616;font-weight:400;">12 KB</div><div class="t" style="left:1461.5px;top:581.5px;font-size:23.6px;color:#161616;font-weight:400;">Adobe...Data File</div><div style="position:absolute;left:602px;top:623.2px;width:30px;height:30px;background:#efefef"></div><svg style="left:609.5px;top:629.7px" width="15" height="16" viewBox="0 0 15 16"><path d="M5.5 13.5 V3.2 L13.5 1.3 V11.5" fill="none" stroke="#c4c4c4" stroke-width="1.6"/><path d="M5.5 4.8 L13.5 2.9" stroke="#c4c4c4" stroke-width="2.6"/><ellipse cx="3.6" cy="13.8" rx="2.6" ry="2" fill="#c4c4c4"/><ellipse cx="11.6" cy="11.8" rx="2.6" ry="2" fill="#c4c4c4"/></svg><div style="position:absolute;left:650px;top:607.2px;width:340px;height:60px;overflow:hidden"><div class="t" style="left:1.0px;top:20.0px;font-size:23.6px;color:#161616;font-weight:400;">Done2.aif</div></div><div class="t" style="left:1015.7px;top:627.2px;font-size:23.6px;color:#161616;font-weight:400;">9 Nov 2021 at 18:04</div><div class="t" style="right:1140.0px;top:627.2px;font-size:23.6px;color:#161616;font-weight:400;">98 KB</div><div class="t" style="left:1461.5px;top:627.2px;font-size:23.6px;color:#161616;font-weight:400;">AIFF audio</div><div style="position:absolute;left:602px;top:668.9000000000001px;width:30px;height:30px;background:#efefef"></div><svg style="left:609.5px;top:675.4000000000001px" width="15" height="16" viewBox="0 0 15 16"><path d="M5.5 13.5 V3.2 L13.5 1.3 V11.5" fill="none" stroke="#c4c4c4" stroke-width="1.6"/><path d="M5.5 4.8 L13.5 2.9" stroke="#c4c4c4" stroke-width="2.6"/><ellipse cx="3.6" cy="13.8" rx="2.6" ry="2" fill="#c4c4c4"/><ellipse cx="11.6" cy="11.8" rx="2.6" ry="2" fill="#c4c4c4"/></svg><div style="position:absolute;left:650px;top:652.9px;width:340px;height:60px;overflow:hidden"><div class="t" style="left:1.0px;top:20.0px;font-size:23.6px;color:#161616;font-weight:400;">Done2.mp3</div></div><div class="t" style="left:1015.7px;top:672.9px;font-size:23.6px;color:#161616;font-weight:400;">9 Nov 2021 at 18:04</div><div class="t" style="right:1140.0px;top:672.9px;font-size:23.6px;color:#161616;font-weight:400;">25 KB</div><div class="t" style="left:1461.5px;top:672.9px;font-size:23.6px;color:#161616;font-weight:400;">MP3 audio</div><div style="position:absolute;left:602px;top:714.6px;width:30px;height:30px;background:#efefef"></div><svg style="left:609.5px;top:721.1px" width="15" height="16" viewBox="0 0 15 16"><path d="M5.5 13.5 V3.2 L13.5 1.3 V11.5" fill="none" stroke="#c4c4c4" stroke-width="1.6"/><path d="M5.5 4.8 L13.5 2.9" stroke="#c4c4c4" stroke-width="2.6"/><ellipse cx="3.6" cy="13.8" rx="2.6" ry="2" fill="#c4c4c4"/><ellipse cx="11.6" cy="11.8" rx="2.6" ry="2" fill="#c4c4c4"/></svg><div style="position:absolute;left:650px;top:698.6px;width:340px;height:60px;overflow:hidden"><div class="t" style="left:1.0px;top:20.0px;font-size:23.6px;color:#161616;font-weight:400;">Done3 - 10.11.2021, 13.52.aif</div></div><div class="t" style="left:1015.7px;top:718.6px;font-size:23.6px;color:#161616;font-weight:400;">10 Nov 2021 at 13:52</div><div class="t" style="right:1140.0px;top:718.6px;font-size:23.6px;color:#161616;font-weight:400;">1,1 MB</div><div class="t" style="left:1461.5px;top:718.6px;font-size:23.6px;color:#161616;font-weight:400;">AIFF audio</div><svg style="left:603px;top:761.8px" width="28" height="27" viewBox="0 0 28 27"><rect x="0.5" y="0.5" width="27" height="26" rx="2" fill="#fff" stroke="#cfcfcf"/><rect x="6.0" y="9.0" width="1" height="4" fill="#555"/><rect x="7.9" y="7.5" width="1" height="7" fill="#555"/><rect x="9.8" y="6.0" width="1" height="10" fill="#555"/><rect x="11.7" y="8.0" width="1" height="6" fill="#555"/><rect x="13.6" y="5.0" width="1" height="12" fill="#555"/><rect x="15.5" y="7.0" width="1" height="8" fill="#555"/><rect x="17.4" y="8.5" width="1" height="5" fill="#555"/><rect x="19.3" y="6.5" width="1" height="9" fill="#555"/><rect x="21.2" y="9.0" width="1" height="4" fill="#555"/><text x="14" y="22" font-size="6.5" font-family="Liberation Sans" font-weight="700" text-anchor="middle" fill="#444">PKF</text></svg><div style="position:absolute;left:650px;top:744.3px;width:340px;height:60px;overflow:hidden"><div class="t" style="left:1.0px;top:20.0px;font-size:23.6px;color:#161616;font-weight:400;">Done3 - 10.11.2021, 13.52.pkf</div></div><div class="t" style="left:1015.7px;top:764.3px;font-size:23.6px;color:#161616;font-weight:400;">10 Nov 2021 at 13:52</div><div class="t" style="right:1140.0px;top:764.3px;font-size:23.6px;color:#161616;font-weight:400;">11 KB</div><div class="t" style="left:1461.5px;top:764.3px;font-size:23.6px;color:#161616;font-weight:400;">Adobe...Data File</div><div style="position:absolute;left:602px;top:806.0px;width:30px;height:30px;background:#efefef"></div><svg style="left:609.5px;top:812.5px" width="15" height="16" viewBox="0 0 15 16"><path d="M5.5 13.5 V3.2 L13.5 1.3 V11.5" fill="none" stroke="#c4c4c4" stroke-width="1.6"/><path d="M5.5 4.8 L13.5 2.9" stroke="#c4c4c4" stroke-width="2.6"/><ellipse cx="3.6" cy="13.8" rx="2.6" ry="2" fill="#c4c4c4"/><ellipse cx="11.6" cy="11.8" rx="2.6" ry="2" fill="#c4c4c4"/></svg><div style="position:absolute;left:650px;top:790.0px;width:340px;height:60px;overflow:hidden"><div class="t" style="left:1.0px;top:20.0px;font-size:23.6px;color:#161616;font-weight:400;">Done3 - 13.11.2021, 23.29.aif</div></div><div class="t" style="left:1015.7px;top:810.0px;font-size:23.6px;color:#161616;font-weight:400;">13 Nov 2021 at 23:29</div><div class="t" style="right:1140.0px;top:810.0px;font-size:23.6px;color:#161616;font-weight:400;">88 KB</div><div class="t" style="left:1461.5px;top:810.0px;font-size:23.6px;color:#161616;font-weight:400;">AIFF audio</div><div style="position:absolute;left:602px;top:851.7px;width:30px;height:30px;background:#efefef"></div><svg style="left:609.5px;top:858.2px" width="15" height="16" viewBox="0 0 15 16"><path d="M5.5 13.5 V3.2 L13.5 1.3 V11.5" fill="none" stroke="#c4c4c4" stroke-width="1.6"/><path d="M5.5 4.8 L13.5 2.9" stroke="#c4c4c4" stroke-width="2.6"/><ellipse cx="3.6" cy="13.8" rx="2.6" ry="2" fill="#c4c4c4"/><ellipse cx="11.6" cy="11.8" rx="2.6" ry="2" fill="#c4c4c4"/></svg><div style="position:absolute;left:650px;top:835.7px;width:340px;height:60px;overflow:hidden"><div class="t" style="left:1.0px;top:20.0px;font-size:23.6px;color:#161616;font-weight:400;">Done3 - 13.11.2021, 23.31.aif</div></div><div class="t" style="left:1015.7px;top:855.7px;font-size:23.6px;color:#161616;font-weight:400;">13 Nov 2021 at 23:31</div><div class="t" style="right:1140.0px;top:855.7px;font-size:23.6px;color:#161616;font-weight:400;">1,3 MB</div><div class="t" style="left:1461.5px;top:855.7px;font-size:23.6px;color:#161616;font-weight:400;">AIFF audio</div><svg style="left:603px;top:898.9000000000001px" width="28" height="27" viewBox="0 0 28 27"><rect x="0.5" y="0.5" width="27" height="26" rx="2" fill="#fff" stroke="#cfcfcf"/><rect x="6.0" y="9.0" width="1" height="4" fill="#555"/><rect x="7.9" y="7.5" width="1" height="7" fill="#555"/><rect x="9.8" y="6.0" width="1" height="10" fill="#555"/><rect x="11.7" y="8.0" width="1" height="6" fill="#555"/><rect x="13.6" y="5.0" width="1" height="12" fill="#555"/><rect x="15.5" y="7.0" width="1" height="8" fill="#555"/><rect x="17.4" y="8.5" width="1" height="5" fill="#555"/><rect x="19.3" y="6.5" width="1" height="9" fill="#555"/><rect x="21.2" y="9.0" width="1" height="4" fill="#555"/><text x="14" y="22" font-size="6.5" font-family="Liberation Sans" font-weight="700" text-anchor="middle" fill="#444">PKF</text></svg><div style="position:absolute;left:650px;top:881.4px;width:340px;height:60px;overflow:hidden"><div class="t" style="left:1.0px;top:20.0px;font-size:23.6px;color:#161616;font-weight:400;">Done3 - 13.11.2021, 23.31.pkf</div></div><div class="t" style="left:1015.7px;top:901.4px;font-size:23.6px;color:#161616;font-weight:400;">13 Nov 2021 at 23:31</div><div class="t" style="right:1140.0px;top:901.4px;font-size:23.6px;color:#161616;font-weight:400;">14 KB</div><div class="t" style="left:1461.5px;top:901.4px;font-size:23.6px;color:#161616;font-weight:400;">Adobe...Data File</div><div style="position:absolute;left:602px;top:943.1000000000001px;width:30px;height:30px;background:#efefef"></div><svg style="left:609.5px;top:949.6000000000001px" width="15" height="16" viewBox="0 0 15 16"><path d="M5.5 13.5 V3.2 L13.5 1.3 V11.5" fill="none" stroke="#c4c4c4" stroke-width="1.6"/><path d="M5.5 4.8 L13.5 2.9" stroke="#c4c4c4" stroke-width="2.6"/><ellipse cx="3.6" cy="13.8" rx="2.6" ry="2" fill="#c4c4c4"/><ellipse cx="11.6" cy="11.8" rx="2.6" ry="2" fill="#c4c4c4"/></svg><div style="position:absolute;left:650px;top:927.1px;width:340px;height:60px;overflow:hidden"><div class="t" style="left:1.0px;top:20.0px;font-size:23.6px;color:#161616;font-weight:400;">Done3 - 13.11.2021, 23.33.aif</div></div><div class="t" style="left:1015.7px;top:947.1px;font-size:23.6px;color:#161616;font-weight:400;">13 Nov 2021 at 23:33</div><div class="t" style="right:1140.0px;top:947.1px;font-size:23.6px;color:#161616;font-weight:400;">1,3 MB</div><div class="t" style="left:1461.5px;top:947.1px;font-size:23.6px;color:#161616;font-weight:400;">AIFF audio</div><svg style="left:603px;top:990.3px" width="28" height="27" viewBox="0 0 28 27"><rect x="0.5" y="0.5" width="27" height="26" rx="2" fill="#fff" stroke="#cfcfcf"/><rect x="6.0" y="9.0" width="1" height="4" fill="#555"/><rect x="7.9" y="7.5" width="1" height="7" fill="#555"/><rect x="9.8" y="6.0" width="1" height="10" fill="#555"/><rect x="11.7" y="8.0" width="1" height="6" fill="#555"/><rect x="13.6" y="5.0" width="1" height="12" fill="#555"/><rect x="15.5" y="7.0" width="1" height="8" fill="#555"/><rect x="17.4" y="8.5" width="1" height="5" fill="#555"/><rect x="19.3" y="6.5" width="1" height="9" fill="#555"/><rect x="21.2" y="9.0" width="1" height="4" fill="#555"/><text x="14" y="22" font-size="6.5" font-family="Liberation Sans" font-weight="700" text-anchor="middle" fill="#444">PKF</text></svg><div style="position:absolute;left:650px;top:972.8px;width:340px;height:60px;overflow:hidden"><div class="t" style="left:1.0px;top:20.0px;font-size:23.6px;color:#161616;font-weight:400;">Done3 - 13.11.2021, 23.33.pkf</div></div><div class="t" style="left:1015.7px;top:992.8px;font-size:23.6px;color:#161616;font-weight:400;">13 Nov 2021 at 23:33</div><div class="t" style="right:1140.0px;top:992.8px;font-size:23.6px;color:#161616;font-weight:400;">14 KB</div><div class="t" style="left:1461.5px;top:992.8px;font-size:23.6px;color:#161616;font-weight:400;">Adobe...Data File</div><div style="position:absolute;left:602px;top:1034.5px;width:30px;height:30px;background:#efefef"></div><svg style="left:609.5px;top:1041.0px" width="15" height="16" viewBox="0 0 15 16"><path d="M5.5 13.5 V3.2 L13.5 1.3 V11.5" fill="none" stroke="#c4c4c4" stroke-width="1.6"/><path d="M5.5 4.8 L13.5 2.9" stroke="#c4c4c4" stroke-width="2.6"/><ellipse cx="3.6" cy="13.8" rx="2.6" ry="2" fill="#c4c4c4"/><ellipse cx="11.6" cy="11.8" rx="2.6" ry="2" fill="#c4c4c4"/></svg><div style="position:absolute;left:650px;top:1018.5px;width:340px;height:60px;overflow:hidden"><div class="t" style="left:1.0px;top:20.0px;font-size:23.6px;color:#161616;font-weight:400;">Done3.aif</div></div><div class="t" style="left:1015.7px;top:1038.5px;font-size:23.6px;color:#161616;font-weight:400;">13 Nov 2021 at 23:35</div><div class="t" style="right:1140.0px;top:1038.5px;font-size:23.6px;color:#161616;font-weight:400;">90 KB</div><div class="t" style="left:1461.5px;top:1038.5px;font-size:23.6px;color:#161616;font-weight:400;">AIFF audio</div><svg style="left:605px;top:1080.2px" width="23" height="30" viewBox="0 0 23 30"><path d="M0.5 0.5 H17 L22.5 6 V29.5 H0.5 Z" fill="#fff" stroke="#dadada"/><rect x="4" y="9" width="15" height="15" rx="3.5" fill="#2a2a2a"/><path d="M8 21 C9 17 12 16 14 16 L16 12" stroke="#f0a030" stroke-width="2.5" fill="none"/><circle cx="9.5" cy="20" r="2.5" fill="#f5b040"/></svg><div style="position:absolute;left:650px;top:1064.2px;width:340px;height:60px;overflow:hidden"><div class="t" style="left:1.0px;top:20.0px;font-size:23.6px;color:#161616;font-weight:400;">Done3.band</div></div><div class="t" style="left:1015.7px;top:1084.2px;font-size:23.6px;color:#161616;font-weight:400;">13 Nov 2021 at 23:40</div><div class="t" style="right:1140.0px;top:1084.2px;font-size:23.6px;color:#161616;font-weight:400;">1,5 MB</div><div class="t" style="left:1461.5px;top:1084.2px;font-size:23.6px;color:#161616;font-weight:400;">Garage...Project</div><div style="position:absolute;left:602px;top:1125.9px;width:30px;height:30px;background:#efefef"></div><svg style="left:609.5px;top:1132.4px" width="15" height="16" viewBox="0 0 15 16"><path d="M5.5 13.5 V3.2 L13.5 1.3 V11.5" fill="none" stroke="#c4c4c4" stroke-width="1.6"/><path d="M5.5 4.8 L13.5 2.9" stroke="#c4c4c4" stroke-width="2.6"/><ellipse cx="3.6" cy="13.8" rx="2.6" ry="2" fill="#c4c4c4"/><ellipse cx="11.6" cy="11.8" rx="2.6" ry="2" fill="#c4c4c4"/></svg><div style="position:absolute;left:650px;top:1109.9px;width:340px;height:60px;overflow:hidden"><div class="t" style="left:1.0px;top:20.0px;font-size:23.6px;color:#161616;font-weight:700;-webkit-text-stroke:0;">Done4.aif</div></div><div class="t" style="left:1015.7px;top:1129.9px;font-size:23.6px;color:#161616;font-weight:400;">14 Nov 2021 at 10:12</div><div class="t" style="right:1140.0px;top:1129.9px;font-size:23.6px;color:#161616;font-weight:700;-webkit-text-stroke:0;">95 KB</div><div class="t" style="left:1461.5px;top:1129.9px;font-size:23.6px;color:#161616;font-weight:700;-webkit-text-stroke:0;">AIFF audio</div><div style="position:absolute;left:602px;top:1171.6000000000001px;width:30px;height:30px;background:#efefef"></div><svg style="left:609.5px;top:1178.1000000000001px" width="15" height="16" viewBox="0 0 15 16"><path d="M5.5 13.5 V3.2 L13.5 1.3 V11.5" fill="none" stroke="#c4c4c4" stroke-width="1.6"/><path d="M5.5 4.8 L13.5 2.9" stroke="#c4c4c4" stroke-width="2.6"/><ellipse cx="3.6" cy="13.8" rx="2.6" ry="2" fill="#c4c4c4"/><ellipse cx="11.6" cy="11.8" rx="2.6" ry="2" fill="#c4c4c4"/></svg><div style="position:absolute;left:650px;top:1155.6px;width:340px;height:60px;overflow:hidden"><div class="t" style="left:1.0px;top:20.0px;font-size:23.6px;color:#161616;font-weight:400;">drag to trash.aif</div></div><div class="t" style="left:1015.7px;top:1175.6px;font-size:23.6px;color:#161616;font-weight:400;">14 Nov 2021 at 10:20</div><div class="t" style="right:1140.0px;top:1175.6px;font-size:23.6px;color:#161616;font-weight:400;">40 KB</div><div class="t" style="left:1461.5px;top:1175.6px;font-size:23.6px;color:#161616;font-weight:400;">AIFF audio</div><div style="position:absolute;left:602px;top:1217.3px;width:30px;height:30px;background:#efefef"></div><svg style="left:609.5px;top:1223.8px" width="15" height="16" viewBox="0 0 15 16"><path d="M5.5 13.5 V3.2 L13.5 1.3 V11.5" fill="none" stroke="#c4c4c4" stroke-width="1.6"/><path d="M5.5 4.8 L13.5 2.9" stroke="#c4c4c4" stroke-width="2.6"/><ellipse cx="3.6" cy="13.8" rx="2.6" ry="2" fill="#c4c4c4"/><ellipse cx="11.6" cy="11.8" rx="2.6" ry="2" fill="#c4c4c4"/></svg><div style="position:absolute;left:650px;top:1201.3px;width:340px;height:60px;overflow:hidden"><div class="t" style="left:1.0px;top:20.0px;font-size:23.6px;color:#161616;font-weight:400;">Grab.aif</div></div><div class="t" style="left:1015.7px;top:1221.3px;font-size:23.6px;color:#161616;font-weight:400;">14 Nov 2021 at 10:22</div><div class="t" style="right:1140.0px;top:1221.3px;font-size:23.6px;color:#161616;font-weight:400;">33 KB</div><div class="t" style="left:1461.5px;top:1221.3px;font-size:23.6px;color:#161616;font-weight:400;">AIFF audio</div><div style="position:absolute;left:602px;top:1263.0px;width:30px;height:30px;background:#efefef"></div><svg style="left:609.5px;top:1269.5px" width="15" height="16" viewBox="0 0 15 16"><path d="M5.5 13.5 V3.2 L13.5 1.3 V11.5" fill="none" stroke="#c4c4c4" stroke-width="1.6"/><path d="M5.5 4.8 L13.5 2.9" stroke="#c4c4c4" stroke-width="2.6"/><ellipse cx="3.6" cy="13.8" rx="2.6" ry="2" fill="#c4c4c4"/><ellipse cx="11.6" cy="11.8" rx="2.6" ry="2" fill="#c4c4c4"/></svg><div style="position:absolute;left:650px;top:1247.0px;width:340px;height:60px;overflow:hidden"><div class="t" style="left:1.0px;top:20.0px;font-size:23.6px;color:#161616;font-weight:400;">move to trash.aif</div></div><div class="t" style="left:1015.7px;top:1267.0px;font-size:23.6px;color:#161616;font-weight:400;">14 Nov 2021 at 10:25</div><div class="t" style="right:1140.0px;top:1267.0px;font-size:23.6px;color:#161616;font-weight:400;">44 KB</div><div class="t" style="left:1461.5px;top:1267.0px;font-size:23.6px;color:#161616;font-weight:400;">AIFF audio</div></div></div><div style="position:absolute;left:567px;top:269px;width:1838px;height:52px;background:#fcfcfc;border-bottom:1.5px solid #dadada"></div><div style="position:absolute;left:585.5px;top:280px;width:1.5px;height:30px;background:#e2e2e4"></div><div style="position:absolute;left:995px;top:280px;width:1.5px;height:30px;background:#e2e2e4"></div><div style="position:absolute;left:1256px;top:280px;width:1.5px;height:30px;background:#e2e2e4"></div><div style="position:absolute;left:1441px;top:280px;width:1.5px;height:30px;background:#e2e2e4"></div><div style="position:absolute;left:1658px;top:280px;width:1.5px;height:30px;background:#e2e2e4"></div><div class="t" style="left:603.0px;top:284.8px;font-size:22.4px;color:#141414;font-weight:700;-webkit-text-stroke:0;">Name</div><div class="t" style="left:1015.7px;top:284.8px;font-size:22.4px;color:#1e1e1e;font-weight:400;">Date Modified</div><div class="t" style="left:1276.6px;top:284.8px;font-size:22.4px;color:#1e1e1e;font-weight:400;">Size</div><div class="t" style="left:1461.4px;top:284.8px;font-size:22.4px;color:#1e1e1e;font-weight:400;">Kind</div><svg style="left:966px;top:292px" width="16" height="10" viewBox="0 0 16 10"><path d="M1.5 8.5 L8 2 L14.5 8.5" fill="none" stroke="#5a5a5e" stroke-width="2.2" stroke-linecap="round" stroke-linejoin="round"/></svg><div style="position:absolute;left:950.5px;top:440px;width:445.5px;height:944px;border-radius:13px;background:linear-gradient(180deg,#d2eceb 0px,#dcecec 40px,#e8eceb 120px,#ededed 200px,#eeeeee 100%);box-shadow:0 0 0 1px rgba(0,0,0,0.16),0 10px 30px rgba(0,0,0,0.25)"></div><div class="t" style="left:978.0px;top:458.9px;font-size:25.5px;color:#1c1c1c;font-weight:400;">New Folder with Selection...</div><div style="position:absolute;left:977.5px;top:501.25px;width:392px;height:1.5px;background:#d2d2d2"></div><div class="t" style="left:978.0px;top:522.2px;font-size:25.5px;color:#1c1c1c;font-weight:400;">Open</div><div class="t" style="left:978.0px;top:563.8px;font-size:25.5px;color:#1c1c1c;font-weight:400;">Open With</div><svg style="left:1356px;top:568.1px" width="12" height="17" viewBox="0 0 12 17"><path d="M2 2 L9.5 8.5 L2 15" fill="none" stroke="#1e1e1e" stroke-width="2.8" stroke-linecap="round" stroke-linejoin="round"/></svg><div style="position:absolute;left:977.5px;top:605.25px;width:392px;height:1.5px;background:#d2d2d2"></div><div class="t" style="left:978.0px;top:626.2px;font-size:25.5px;color:#1c1c1c;font-weight:400;">Move to Trash</div><div style="position:absolute;left:977.5px;top:668.65px;width:392px;height:1.5px;background:#d2d2d2"></div><div class="t" style="left:978.0px;top:689.2px;font-size:25.5px;color:#1c1c1c;font-weight:400;">Rename</div><div class="t" style="left:978.0px;top:731.2px;font-size:25.5px;color:#1c1c1c;font-weight:400;">Duplicate</div><div class="t" style="left:978.0px;top:772.7px;font-size:25.5px;color:#1c1c1c;font-weight:400;">Touch</div><div class="t" style="left:978.0px;top:814.7px;font-size:25.5px;color:#1c1c1c;font-weight:400;">Compress to ZIP</div><div class="t" style="left:978.0px;top:856.2px;font-size:25.5px;color:#1c1c1c;font-weight:400;">Quick Look</div><div style="position:absolute;left:977.5px;top:899.25px;width:392px;height:1.5px;background:#d2d2d2"></div><div class="t" style="left:978.0px;top:919.7px;font-size:25.5px;color:#1c1c1c;font-weight:400;">Cut via Trash</div><div class="t" style="left:978.0px;top:961.5px;font-size:25.5px;color:#1c1c1c;font-weight:400;">Copy</div><div class="t" style="left:978.0px;top:1003.6px;font-size:25.5px;color:#1c1c1c;font-weight:400;">Paste</div><div class="t" style="left:978.0px;top:1045.2px;font-size:25.5px;color:#1c1c1c;font-weight:400;">Paste as Symlink</div><div class="t" style="left:978.0px;top:1087.2px;font-size:25.5px;color:#1c1c1c;font-weight:400;">Paste as Alias</div><div style="position:absolute;left:977.5px;top:1129.65px;width:392px;height:1.5px;background:#d2d2d2"></div><div class="t" style="left:978.0px;top:1150.2px;font-size:25.5px;color:#1c1c1c;font-weight:400;">Share</div><svg style="left:1356px;top:1154.5px" width="12" height="17" viewBox="0 0 12 17"><path d="M2 2 L9.5 8.5 L2 15" fill="none" stroke="#1e1e1e" stroke-width="2.8" stroke-linecap="round" stroke-linejoin="round"/></svg><div style="position:absolute;left:977.5px;top:1192.25px;width:392px;height:1.5px;background:#d2d2d2"></div><div style="position:absolute;left:978.2px;top:1214.1000000000001px;width:24.6px;height:24.6px;border-radius:50%;background:#f3dcdc;border:2.2px solid #e8524a"></div><div style="position:absolute;left:1023.8800000000001px;top:1214.1000000000001px;width:24.6px;height:24.6px;border-radius:50%;background:#f3e4d4;border:2.2px solid #f0a040"></div><div style="position:absolute;left:1069.56px;top:1214.1000000000001px;width:24.6px;height:24.6px;border-radius:50%;background:#f4ecd8;border:2.2px solid #f6c640"></div><div style="position:absolute;left:1115.24px;top:1214.1000000000001px;width:24.6px;height:24.6px;border-radius:50%;background:#d8ecd8;border:2.2px solid #48c048"></div><div style="position:absolute;left:1160.92px;top:1214.1000000000001px;width:24.6px;height:24.6px;border-radius:50%;background:#d4e2f4;border:2.2px solid #2f7ce8"></div><div style="position:absolute;left:1206.6000000000001px;top:1214.1000000000001px;width:24.6px;height:24.6px;border-radius:50%;background:#e6dcf0;border:2.2px solid #a85cdc"></div><div style="position:absolute;left:1252.28px;top:1214.1000000000001px;width:24.6px;height:24.6px;border-radius:50%;background:#dedede;border:2.2px solid #8e8e8e"></div><div style="position:absolute;left:977.5px;top:1259.25px;width:392px;height:1.5px;background:#d2d2d2"></div><div class="t" style="left:978.0px;top:1279.2px;font-size:25.5px;color:#1c1c1c;font-weight:400;">Open Terminal at This Folder</div><div style="position:absolute;left:977.5px;top:1322.25px;width:392px;height:1.5px;background:#d2d2d2"></div><div class="t" style="left:978.0px;top:1341.8px;font-size:25.5px;color:#1c1c1c;font-weight:400;">Services</div><svg style="left:1356px;top:1346.1px" width="12" height="17" viewBox="0 0 12 17"><path d="M2 2 L9.5 8.5 L2 15" fill="none" stroke="#1e1e1e" stroke-width="2.8" stroke-linecap="round" stroke-linejoin="round"/></svg><div style="position:absolute;left:599px;top:1440.5px;width:1362px;height:149px;border-radius:30px;background:linear-gradient(90deg,#6a56d2 0%,#6c64ec 15%,#6e6cf6 35%,#7470f6 57%,#c07cf8 61%,#cc80f4 75%,#f088dc 86%,#fc8ad0 100%)"></div><svg style="left:619.5px;top:1461px" width="98" height="98" viewBox="0 0 98 98"><defs><clipPath id="ic619"><rect x="0" y="0" width="98" height="98" rx="22"/></clipPath><linearGradient id="fb" x1="0" y1="0" x2="0" y2="1"><stop offset="0" stop-color="#1ec0fa"/><stop offset="1" stop-color="#2a6fe6"/></linearGradient>
      <linearGradient id="fw" x1="0" y1="0" x2="0" y2="1"><stop offset="0" stop-color="#f4f4f6"/><stop offset="1" stop-color="#d6dbe0"/></linearGradient></defs>
      <g clip-path="url(#ic619)"><rect width="98" height="98" fill="url(#fw)"/>
      <path d="M0 0 H52 C44 18 41 38 40 54 H56 C57 70 58 84 62 98 H0 Z" fill="url(#fb)"/>
      <path d="M18.5 65 C32 79 62 80 77.5 65.5" fill="none" stroke="#1a1a2a" stroke-width="2.6" stroke-linecap="round"/>
      <rect x="23" y="27" width="4.5" height="11" rx="2.2" fill="#1a1a2a"/><rect x="69" y="27" width="4.5" height="11" rx="2.2" fill="#1a1a2a"/></g></svg><svg style="left:749px;top:1461px" width="98" height="98" viewBox="0 0 98 98"><defs><clipPath id="ic749"><rect x="0" y="0" width="98" height="98" rx="22"/></clipPath></defs><g clip-path="url(#ic749)"><rect width="98" height="98" fill="#d2d0f2"/><rect x="16" y="16" width="18.5" height="18.5" rx="4.5" fill="#34d04a"/><rect x="40" y="16" width="18.5" height="18.5" rx="4.5" fill="#ffc414"/><rect x="64" y="16" width="18.5" height="18.5" rx="4.5" fill="#f8901a"/><rect x="16" y="40" width="18.5" height="18.5" rx="4.5" fill="#e42222"/><rect x="40" y="40" width="18.5" height="18.5" rx="4.5" fill="#a8a8ac"/><rect x="64" y="40" width="18.5" height="18.5" rx="4.5" fill="#ff4664"/><rect x="16" y="64" width="18.5" height="18.5" rx="4.5" fill="#a444d8"/><rect x="40" y="64" width="18.5" height="18.5" rx="4.5" fill="#14a4f8"/><rect x="64" y="64" width="18.5" height="18.5" rx="4.5" fill="#34d0a4"/></g></svg><svg style="left:878.5px;top:1461px" width="98" height="98" viewBox="0 0 98 98"><defs><clipPath id="ic878"><rect x="0" y="0" width="98" height="98" rx="22"/></clipPath><linearGradient id="sfg" x1="0" y1="0" x2="0" y2="1"><stop offset="0" stop-color="#fdfdfd"/><stop offset="1" stop-color="#e4e2e0"/></linearGradient></defs><g clip-path="url(#ic878)"><rect width="98" height="98" fill="url(#sfg)"/><circle cx="49" cy="49" r="42" fill="#1e8ef0"/><circle cx="49" cy="49" r="42" fill="none" stroke="#2a84e0" stroke-width="1"/><line x1="82.00" y1="49.00" x2="87.00" y2="49.00" stroke="#d8ecfc" stroke-width="1"/><line x1="81.82" y1="52.45" x2="85.30" y2="52.82" stroke="#d8ecfc" stroke-width="1"/><line x1="81.28" y1="55.86" x2="84.70" y2="56.59" stroke="#d8ecfc" stroke-width="1"/><line x1="80.38" y1="59.20" x2="83.71" y2="60.28" stroke="#d8ecfc" stroke-width="1"/><line x1="79.15" y1="62.42" x2="82.34" y2="63.85" stroke="#d8ecfc" stroke-width="1"/><line x1="77.58" y1="65.50" x2="81.91" y2="68.00" stroke="#d8ecfc" stroke-width="1"/><line x1="75.70" y1="68.40" x2="78.53" y2="70.45" stroke="#d8ecfc" stroke-width="1"/><line x1="73.52" y1="71.08" x2="76.12" y2="73.42" stroke="#d8ecfc" stroke-width="1"/><line x1="71.08" y1="73.52" x2="73.42" y2="76.12" stroke="#d8ecfc" stroke-width="1"/><line x1="68.40" y1="75.70" x2="70.45" y2="78.53" stroke="#d8ecfc" stroke-width="1"/><line x1="65.50" y1="77.58" x2="68.00" y2="81.91" stroke="#d8ecfc" stroke-width="1"/><line x1="62.42" y1="79.15" x2="63.85" y2="82.34" stroke="#d8ecfc" stroke-width="1"/><line x1="59.20" y1="80.38" x2="60.28" y2="83.71" stroke="#d8ecfc" stroke-width="1"/><line x1="55.86" y1="81.28" x2="56.59" y2="84.70" stroke="#d8ecfc" stroke-width="1"/><line x1="52.45" y1="81.82" x2="52.82" y2="85.30" stroke="#d8ecfc" stroke-width="1"/><line x1="49.00" y1="82.00" x2="49.00" y2="87.00" stroke="#d8ecfc" stroke-width="1"/><line x1="45.55" y1="81.82" x2="45.18" y2="85.30" stroke="#d8ecfc" stroke-width="1"/><line x1="42.14" y1="81.28" x2="41.41" y2="84.70" stroke="#d8ecfc" stroke-width="1"/><line x1="38.80" y1="80.38" x2="37.72" y2="83.71" stroke="#d8ecfc" stroke-width="1"/><line x1="35.58" y1="79.15" x2="34.15" y2="82.34" stroke="#d8ecfc" stroke-width="1"/><line x1="32.50" y1="77.58" x2="30.00" y2="81.91" stroke="#d8ecfc" stroke-width="1"/><line x1="29.60" y1="75.70" x2="27.55" y2="78.53" stroke="#d8ecfc" stroke-width="1"/><line x1="26.92" y1="73.52" x2="24.58" y2="76.12" stroke="#d8ecfc" stroke-width="1"/><line x1="24.48" y1="71.08" x2="21.88" y2="73.42" stroke="#d8ecfc" stroke-width="1"/><line x1="22.30" y1="68.40" x2="19.47" y2="70.45" stroke="#d8ecfc" stroke-width="1"/><line x1="20.42" y1="65.50" x2="16.09" y2="68.00" stroke="#d8ecfc" stroke-width="1"/><line x1="18.85" y1="62.42" x2="15.66" y2="63.85" stroke="#d8ecfc" stroke-width="1"/><line x1="17.62" y1="59.20" x2="14.29" y2="60.28" stroke="#d8ecfc" stroke-width="1"/><line x1="16.72" y1="55.86" x2="13.30" y2="56.59" stroke="#d8ecfc" stroke-width="1"/><line x1="16.18" y1="52.45" x2="12.70" y2="52.82" stroke="#d8ecfc" stroke-width="1"/><line x1="16.00" y1="49.00" x2="11.00" y2="49.00" stroke="#d8ecfc" stroke-width="1"/><line x1="16.18" y1="45.55" x2="12.70" y2="45.18" stroke="#d8ecfc" stroke-width="1"/><line x1="16.72" y1="42.14" x2="13.30" y2="41.41" stroke="#d8ecfc" stroke-width="1"/><line x1="17.62" y1="38.80" x2="14.29" y2="37.72" stroke="#d8ecfc" stroke-width="1"/><line x1="18.85" y1="35.58" x2="15.66" y2="34.15" stroke="#d8ecfc" stroke-width="1"/><line x1="20.42" y1="32.50" x2="16.09" y2="30.00" stroke="#d8ecfc" stroke-width="1"/><line x1="22.30" y1="29.60" x2="19.47" y2="27.55" stroke="#d8ecfc" stroke-width="1"/><line x1="24.48" y1="26.92" x2="21.88" y2="24.58" stroke="#d8ecfc" stroke-width="1"/><line x1="26.92" y1="24.48" x2="24.58" y2="21.88" stroke="#d8ecfc" stroke-width="1"/><line x1="29.60" y1="22.30" x2="27.55" y2="19.47" stroke="#d8ecfc" stroke-width="1"/><line x1="32.50" y1="20.42" x2="30.00" y2="16.09" stroke="#d8ecfc" stroke-width="1"/><line x1="35.58" y1="18.85" x2="34.15" y2="15.66" stroke="#d8ecfc" stroke-width="1"/><line x1="38.80" y1="17.62" x2="37.72" y2="14.29" stroke="#d8ecfc" stroke-width="1"/><line x1="42.14" y1="16.72" x2="41.41" y2="13.30" stroke="#d8ecfc" stroke-width="1"/><line x1="45.55" y1="16.18" x2="45.18" y2="12.70" stroke="#d8ecfc" stroke-width="1"/><line x1="49.00" y1="16.00" x2="49.00" y2="11.00" stroke="#d8ecfc" stroke-width="1"/><line x1="52.45" y1="16.18" x2="52.82" y2="12.70" stroke="#d8ecfc" stroke-width="1"/><line x1="55.86" y1="16.72" x2="56.59" y2="13.30" stroke="#d8ecfc" stroke-width="1"/><line x1="59.20" y1="17.62" x2="60.28" y2="14.29" stroke="#d8ecfc" stroke-width="1"/><line x1="62.42" y1="18.85" x2="63.85" y2="15.66" stroke="#d8ecfc" stroke-width="1"/><line x1="65.50" y1="20.42" x2="68.00" y2="16.09" stroke="#d8ecfc" stroke-width="1"/><line x1="68.40" y1="22.30" x2="70.45" y2="19.47" stroke="#d8ecfc" stroke-width="1"/><line x1="71.08" y1="24.48" x2="73.42" y2="21.88" stroke="#d8ecfc" stroke-width="1"/><line x1="73.52" y1="26.92" x2="76.12" y2="24.58" stroke="#d8ecfc" stroke-width="1"/><line x1="75.70" y1="29.60" x2="78.53" y2="27.55" stroke="#d8ecfc" stroke-width="1"/><line x1="77.58" y1="32.50" x2="81.91" y2="30.00" stroke="#d8ecfc" stroke-width="1"/><line x1="79.15" y1="35.58" x2="82.34" y2="34.15" stroke="#d8ecfc" stroke-width="1"/><line x1="80.38" y1="38.80" x2="83.71" y2="37.72" stroke="#d8ecfc" stroke-width="1"/><line x1="81.28" y1="42.14" x2="84.70" y2="41.41" stroke="#d8ecfc" stroke-width="1"/><line x1="81.82" y1="45.55" x2="85.30" y2="45.18" stroke="#d8ecfc" stroke-width="1"/><path d="M49 49 L79 19 L53 53 Z" fill="#f03030"/><path d="M49 49 L79 19 L45 45 Z" fill="#c82020"/><path d="M49 49 L19 79 L45 45 Z" fill="#f4f4f4"/><path d="M49 49 L19 79 L53 53 Z" fill="#d4d4d4"/></g></svg><svg style="left:1008px;top:1461px" width="98" height="98" viewBox="0 0 98 98"><defs><clipPath id="ic1008"><rect x="0" y="0" width="98" height="98" rx="22"/></clipPath><linearGradient id="mg" x1="0" y1="0" x2="0" y2="1"><stop offset="0" stop-color="#68f47c"/><stop offset="1" stop-color="#10c030"/></linearGradient>
      <radialGradient id="mb" cx="0.45" cy="0.4" r="0.6"><stop offset="0" stop-color="#ffffff"/><stop offset="1" stop-color="#dcecd8"/></radialGradient></defs>
      <g clip-path="url(#ic1008)"><rect width="98" height="98" fill="url(#mg)"/>
      <ellipse cx="49" cy="46" rx="36" ry="29" fill="url(#mb)"/>
      <path d="M26 64 C26 72 22 77 18 80 C28 80 34 75 38 71 Z" fill="#e0eedc"/></g></svg><svg style="left:1137.5px;top:1461px" width="98" height="98" viewBox="0 0 98 98"><defs><clipPath id="ic1137"><rect x="0" y="0" width="98" height="98" rx="22"/></clipPath><linearGradient id="mlg" x1="0" y1="0" x2="0" y2="1"><stop offset="0" stop-color="#1a70f0"/><stop offset="1" stop-color="#18c8f8"/></linearGradient></defs>
      <g clip-path="url(#ic1137)"><rect width="98" height="98" fill="url(#mlg)"/>
      <rect x="15" y="27" width="68" height="44" rx="4" fill="#f4f2f0"/>
      <path d="M16 29 L49 55 L82 29" fill="none" stroke="#c8c4c0" stroke-width="2"/>
      <path d="M16 70 L38 47 M82 70 L60 47" stroke="#c8c4c0" stroke-width="1.5"/></g></svg><svg style="left:1267px;top:1461px" width="98" height="98" viewBox="0 0 98 98"><defs><clipPath id="ic1267"><rect x="0" y="0" width="98" height="98" rx="22"/></clipPath><linearGradient id="mug" x1="0" y1="0" x2="0" y2="1"><stop offset="0" stop-color="#fc5c6c"/><stop offset="1" stop-color="#f42a40"/></linearGradient></defs>
      <g clip-path="url(#ic1267)"><rect width="98" height="98" fill="url(#mug)"/>
      <path d="M36 72 V25 L70 17 V62" fill="none" stroke="#fff" stroke-width="5.5" stroke-linejoin="round"/>
      <path d="M36 27 L70 19 V31 L36 39 Z" fill="#fff"/>
      <ellipse cx="28" cy="72" rx="9.5" ry="8" fill="#fff"/><ellipse cx="62" cy="63" rx="9.5" ry="8" fill="#fff"/></g></svg><svg style="left:1396.5px;top:1461px" width="98" height="98" viewBox="0 0 98 98"><defs><clipPath id="ic1396"><rect x="0" y="0" width="98" height="98" rx="22"/></clipPath><linearGradient id="apg" x1="0" y1="0" x2="0" y2="1"><stop offset="0" stop-color="#1ab4f4"/><stop offset="1" stop-color="#1a6ee0"/></linearGradient></defs>
      <g clip-path="url(#ic1396)"><rect width="98" height="98" fill="url(#apg)"/>
      <g stroke="#fff" stroke-width="6.5" stroke-linecap="round"><path d="M52 19 L28 70"/><path d="M43 19 L73 76"/><path d="M15 58 H80"/><path d="M22 72 L28 63"/></g></g></svg><svg style="left:1526px;top:1461px" width="98" height="98" viewBox="0 0 98 98"><defs><clipPath id="ic1526"><rect x="0" y="0" width="98" height="98" rx="22"/></clipPath><linearGradient id="ssg" x1="0" y1="0" x2="0" y2="1"><stop offset="0" stop-color="#e6e6e6"/><stop offset="1" stop-color="#a0a0a0"/></linearGradient></defs>
      <g clip-path="url(#ic1526)"><rect width="98" height="98" fill="url(#ssg)"/>
      <circle cx="49" cy="49" r="41" fill="#e0e0e0"/>
      <circle cx="49" cy="49" r="39.5" fill="#a8a8a8"/><line x1="81.00" y1="49.00" x2="87.50" y2="49.00" stroke="#2e2e2e" stroke-width="2.4"/><line x1="80.82" y1="52.34" x2="87.29" y2="53.02" stroke="#2e2e2e" stroke-width="2.4"/><line x1="80.30" y1="55.65" x2="86.66" y2="57.00" stroke="#2e2e2e" stroke-width="2.4"/><line x1="79.43" y1="58.89" x2="85.62" y2="60.90" stroke="#2e2e2e" stroke-width="2.4"/><line x1="78.23" y1="62.02" x2="84.17" y2="64.66" stroke="#2e2e2e" stroke-width="2.4"/><line x1="76.71" y1="65.00" x2="82.34" y2="68.25" stroke="#2e2e2e" stroke-width="2.4"/><line x1="74.89" y1="67.81" x2="80.15" y2="71.63" stroke="#2e2e2e" stroke-width="2.4"/><line x1="72.78" y1="70.41" x2="77.61" y2="74.76" stroke="#2e2e2e" stroke-width="2.4"/><line x1="70.41" y1="72.78" x2="74.76" y2="77.61" stroke="#2e2e2e" stroke-width="2.4"/><line x1="67.81" y1="74.89" x2="71.63" y2="80.15" stroke="#2e2e2e" stroke-width="2.4"/><line x1="65.00" y1="76.71" x2="68.25" y2="82.34" stroke="#2e2e2e" stroke-width="2.4"/><line x1="62.02" y1="78.23" x2="64.66" y2="84.17" stroke="#2e2e2e" stroke-width="2.4"/><line x1="58.89" y1="79.43" x2="60.90" y2="85.62" stroke="#2e2e2e" stroke-width="2.4"/><line x1="55.65" y1="80.30" x2="57.00" y2="86.66" stroke="#2e2e2e" stroke-width="2.4"/><line x1="52.34" y1="80.82" x2="53.02" y2="87.29" stroke="#2e2e2e" stroke-width="2.4"/><line x1="49.00" y1="81.00" x2="49.00" y2="87.50" stroke="#2e2e2e" stroke-width="2.4"/><line x1="45.66" y1="80.82" x2="44.98" y2="87.29" stroke="#2e2e2e" stroke-width="2.4"/><line x1="42.35" y1="80.30" x2="41.00" y2="86.66" stroke="#2e2e2e" stroke-width="2.4"/><line x1="39.11" y1="79.43" x2="37.10" y2="85.62" stroke="#2e2e2e" stroke-width="2.4"/><line x1="35.98" y1="78.23" x2="33.34" y2="84.17" stroke="#2e2e2e" stroke-width="2.4"/><line x1="33.00" y1="76.71" x2="29.75" y2="82.34" stroke="#2e2e2e" stroke-width="2.4"/><line x1="30.19" y1="74.89" x2="26.37" y2="80.15" stroke="#2e2e2e" stroke-width="2.4"/><line x1="27.59" y1="72.78" x2="23.24" y2="77.61" stroke="#2e2e2e" stroke-width="2.4"/><line x1="25.22" y1="70.41" x2="20.39" y2="74.76" stroke="#2e2e2e" stroke-width="2.4"/><line x1="23.11" y1="67.81" x2="17.85" y2="71.63" stroke="#2e2e2e" stroke-width="2.4"/><line x1="21.29" y1="65.00" x2="15.66" y2="68.25" stroke="#2e2e2e" stroke-width="2.4"/><line x1="19.77" y1="62.02" x2="13.83" y2="64.66" stroke="#2e2e2e" stroke-width="2.4"/><line x1="18.57" y1="58.89" x2="12.38" y2="60.90" stroke="#2e2e2e" stroke-width="2.4"/><line x1="17.70" y1="55.65" x2="11.34" y2="57.00" stroke="#2e2e2e" stroke-width="2.4"/><line x1="17.18" y1="52.34" x2="10.71" y2="53.02" stroke="#2e2e2e" stroke-width="2.4"/><line x1="17.00" y1="49.00" x2="10.50" y2="49.00" stroke="#2e2e2e" stroke-width="2.4"/><line x1="17.18" y1="45.66" x2="10.71" y2="44.98" stroke="#2e2e2e" stroke-width="2.4"/><line x1="17.70" y1="42.35" x2="11.34" y2="41.00" stroke="#2e2e2e" stroke-width="2.4"/><line x1="18.57" y1="39.11" x2="12.38" y2="37.10" stroke="#2e2e2e" stroke-width="2.4"/><line x1="19.77" y1="35.98" x2="13.83" y2="33.34" stroke="#2e2e2e" stroke-width="2.4"/><line x1="21.29" y1="33.00" x2="15.66" y2="29.75" stroke="#2e2e2e" stroke-width="2.4"/><line x1="23.11" y1="30.19" x2="17.85" y2="26.37" stroke="#2e2e2e" stroke-width="2.4"/><line x1="25.22" y1="27.59" x2="20.39" y2="23.24" stroke="#2e2e2e" stroke-width="2.4"/><line x1="27.59" y1="25.22" x2="23.24" y2="20.39" stroke="#2e2e2e" stroke-width="2.4"/><line x1="30.19" y1="23.11" x2="26.37" y2="17.85" stroke="#2e2e2e" stroke-width="2.4"/><line x1="33.00" y1="21.29" x2="29.75" y2="15.66" stroke="#2e2e2e" stroke-width="2.4"/><line x1="35.98" y1="19.77" x2="33.34" y2="13.83" stroke="#2e2e2e" stroke-width="2.4"/><line x1="39.11" y1="18.57" x2="37.10" y2="12.38" stroke="#2e2e2e" stroke-width="2.4"/><line x1="42.35" y1="17.70" x2="41.00" y2="11.34" stroke="#2e2e2e" stroke-width="2.4"/><line x1="45.66" y1="17.18" x2="44.98" y2="10.71" stroke="#2e2e2e" stroke-width="2.4"/><line x1="49.00" y1="17.00" x2="49.00" y2="10.50" stroke="#2e2e2e" stroke-width="2.4"/><line x1="52.34" y1="17.18" x2="53.02" y2="10.71" stroke="#2e2e2e" stroke-width="2.4"/><line x1="55.65" y1="17.70" x2="57.00" y2="11.34" stroke="#2e2e2e" stroke-width="2.4"/><line x1="58.89" y1="18.57" x2="60.90" y2="12.38" stroke="#2e2e2e" stroke-width="2.4"/><line x1="62.02" y1="19.77" x2="64.66" y2="13.83" stroke="#2e2e2e" stroke-width="2.4"/><line x1="65.00" y1="21.29" x2="68.25" y2="15.66" stroke="#2e2e2e" stroke-width="2.4"/><line x1="67.81" y1="23.11" x2="71.63" y2="17.85" stroke="#2e2e2e" stroke-width="2.4"/><line x1="70.41" y1="25.22" x2="74.76" y2="20.39" stroke="#2e2e2e" stroke-width="2.4"/><line x1="72.78" y1="27.59" x2="77.61" y2="23.24" stroke="#2e2e2e" stroke-width="2.4"/><line x1="74.89" y1="30.19" x2="80.15" y2="26.37" stroke="#2e2e2e" stroke-width="2.4"/><line x1="76.71" y1="33.00" x2="82.34" y2="29.75" stroke="#2e2e2e" stroke-width="2.4"/><line x1="78.23" y1="35.98" x2="84.17" y2="33.34" stroke="#2e2e2e" stroke-width="2.4"/><line x1="79.43" y1="39.11" x2="85.62" y2="37.10" stroke="#2e2e2e" stroke-width="2.4"/><line x1="80.30" y1="42.35" x2="86.66" y2="41.00" stroke="#2e2e2e" stroke-width="2.4"/><line x1="80.82" y1="45.66" x2="87.29" y2="44.98" stroke="#2e2e2e" stroke-width="2.4"/><circle cx="49" cy="49" r="33" fill="#3a3a3a"/><circle cx="49" cy="49" r="29" fill="#9c9c9c"/><line x1="69.00" y1="49.00" x2="74.00" y2="49.00" stroke="#3a3a3a" stroke-width="1.8"/><line x1="68.83" y1="51.61" x2="73.79" y2="52.26" stroke="#3a3a3a" stroke-width="1.8"/><line x1="68.32" y1="54.18" x2="73.15" y2="55.47" stroke="#3a3a3a" stroke-width="1.8"/><line x1="67.48" y1="56.65" x2="72.10" y2="58.57" stroke="#3a3a3a" stroke-width="1.8"/><line x1="66.32" y1="59.00" x2="70.65" y2="61.50" stroke="#3a3a3a" stroke-width="1.8"/><line x1="64.87" y1="61.18" x2="68.83" y2="64.22" stroke="#3a3a3a" stroke-width="1.8"/><line x1="63.14" y1="63.14" x2="66.68" y2="66.68" stroke="#3a3a3a" stroke-width="1.8"/><line x1="61.18" y1="64.87" x2="64.22" y2="68.83" stroke="#3a3a3a" stroke-width="1.8"/><line x1="59.00" y1="66.32" x2="61.50" y2="70.65" stroke="#3a3a3a" stroke-width="1.8"/><line x1="56.65" y1="67.48" x2="58.57" y2="72.10" stroke="#3a3a3a" stroke-width="1.8"/><line x1="54.18" y1="68.32" x2="55.47" y2="73.15" stroke="#3a3a3a" stroke-width="1.8"/><line x1="51.61" y1="68.83" x2="52.26" y2="73.79" stroke="#3a3a3a" stroke-width="1.8"/><line x1="49.00" y1="69.00" x2="49.00" y2="74.00" stroke="#3a3a3a" stroke-width="1.8"/><line x1="46.39" y1="68.83" x2="45.74" y2="73.79" stroke="#3a3a3a" stroke-width="1.8"/><line x1="43.82" y1="68.32" x2="42.53" y2="73.15" stroke="#3a3a3a" stroke-width="1.8"/><line x1="41.35" y1="67.48" x2="39.43" y2="72.10" stroke="#3a3a3a" stroke-width="1.8"/><line x1="39.00" y1="66.32" x2="36.50" y2="70.65" stroke="#3a3a3a" stroke-width="1.8"/><line x1="36.82" y1="64.87" x2="33.78" y2="68.83" stroke="#3a3a3a" stroke-width="1.8"/><line x1="34.86" y1="63.14" x2="31.32" y2="66.68" stroke="#3a3a3a" stroke-width="1.8"/><line x1="33.13" y1="61.18" x2="29.17" y2="64.22" stroke="#3a3a3a" stroke-width="1.8"/><line x1="31.68" y1="59.00" x2="27.35" y2="61.50" stroke="#3a3a3a" stroke-width="1.8"/><line x1="30.52" y1="56.65" x2="25.90" y2="58.57" stroke="#3a3a3a" stroke-width="1.8"/><line x1="29.68" y1="54.18" x2="24.85" y2="55.47" stroke="#3a3a3a" stroke-width="1.8"/><line x1="29.17" y1="51.61" x2="24.21" y2="52.26" stroke="#3a3a3a" stroke-width="1.8"/><line x1="29.00" y1="49.00" x2="24.00" y2="49.00" stroke="#3a3a3a" stroke-width="1.8"/><line x1="29.17" y1="46.39" x2="24.21" y2="45.74" stroke="#3a3a3a" stroke-width="1.8"/><line x1="29.68" y1="43.82" x2="24.85" y2="42.53" stroke="#3a3a3a" stroke-width="1.8"/><line x1="30.52" y1="41.35" x2="25.90" y2="39.43" stroke="#3a3a3a" stroke-width="1.8"/><line x1="31.68" y1="39.00" x2="27.35" y2="36.50" stroke="#3a3a3a" stroke-width="1.8"/><line x1="33.13" y1="36.82" x2="29.17" y2="33.78" stroke="#3a3a3a" stroke-width="1.8"/><line x1="34.86" y1="34.86" x2="31.32" y2="31.32" stroke="#3a3a3a" stroke-width="1.8"/><line x1="36.82" y1="33.13" x2="33.78" y2="29.17" stroke="#3a3a3a" stroke-width="1.8"/><line x1="39.00" y1="31.68" x2="36.50" y2="27.35" stroke="#3a3a3a" stroke-width="1.8"/><line x1="41.35" y1="30.52" x2="39.43" y2="25.90" stroke="#3a3a3a" stroke-width="1.8"/><line x1="43.82" y1="29.68" x2="42.53" y2="24.85" stroke="#3a3a3a" stroke-width="1.8"/><line x1="46.39" y1="29.17" x2="45.74" y2="24.21" stroke="#3a3a3a" stroke-width="1.8"/><line x1="49.00" y1="29.00" x2="49.00" y2="24.00" stroke="#3a3a3a" stroke-width="1.8"/><line x1="51.61" y1="29.17" x2="52.26" y2="24.21" stroke="#3a3a3a" stroke-width="1.8"/><line x1="54.18" y1="29.68" x2="55.47" y2="24.85" stroke="#3a3a3a" stroke-width="1.8"/><line x1="56.65" y1="30.52" x2="58.57" y2="25.90" stroke="#3a3a3a" stroke-width="1.8"/><line x1="59.00" y1="31.68" x2="61.50" y2="27.35" stroke="#3a3a3a" stroke-width="1.8"/><line x1="61.18" y1="33.13" x2="64.22" y2="29.17" stroke="#3a3a3a" stroke-width="1.8"/><line x1="63.14" y1="34.86" x2="66.68" y2="31.32" stroke="#3a3a3a" stroke-width="1.8"/><line x1="64.87" y1="36.82" x2="68.83" y2="33.78" stroke="#3a3a3a" stroke-width="1.8"/><line x1="66.32" y1="39.00" x2="70.65" y2="36.50" stroke="#3a3a3a" stroke-width="1.8"/><line x1="67.48" y1="41.35" x2="72.10" y2="39.43" stroke="#3a3a3a" stroke-width="1.8"/><line x1="68.32" y1="43.82" x2="73.15" y2="42.53" stroke="#3a3a3a" stroke-width="1.8"/><line x1="68.83" y1="46.39" x2="73.79" y2="45.74" stroke="#3a3a3a" stroke-width="1.8"/><circle cx="49" cy="49" r="21" fill="#6c6c6c"/>
      <g stroke="#c8c8c8" stroke-width="3.6" stroke-linecap="round"><path d="M49 49 L31 38"/><path d="M49 49 L72 49"/><path d="M49 49 L38 68"/></g>
      <circle cx="49" cy="49" r="3.2" fill="#d8d8d8"/></g></svg><svg style="left:1656px;top:1461px" width="98" height="98" viewBox="0 0 98 98"><defs><clipPath id="ic1656"><rect x="0" y="0" width="98" height="98" rx="22"/></clipPath><linearGradient id="fag" x1="0" y1="0" x2="0" y2="1"><stop offset="0" stop-color="#e4f2fc"/><stop offset="1" stop-color="#98c4e8"/></linearGradient>
      <linearGradient id="fabg" x1="0" y1="0" x2="0" y2="1"><stop offset="0" stop-color="#0a4690"/><stop offset="1" stop-color="#062c5c"/></linearGradient></defs>
      <g clip-path="url(#ic1656)"><rect width="98" height="98" fill="url(#fabg)"/>
      <path d="M17 28 A3 3 0 0 1 20 22 H37 L43 29 H17 Z" fill="#12a8f8"/>
      <rect x="17" y="27" width="24" height="10" fill="#12a8f8"/>
      <rect x="17" y="29.5" width="62" height="16" rx="3" fill="#f4f6f8"/>
      <path d="M11 41 A2.5 2.5 0 0 1 13.5 38.5 H84 A2.5 2.5 0 0 1 86.5 41 L81 73 A3 3 0 0 1 78 75.5 H19 A3 3 0 0 1 16 73 Z" fill="url(#fag)"/></g></svg><div style="position:absolute;left:1797px;top:1459px;width:2px;height:112px;background:rgba(150,50,120,0.55)"></div><svg style="left:1848px;top:1457px" width="87" height="108" viewBox="0 0 87 108"><defs><linearGradient id="trg" x1="0" y1="0" x2="1" y2="0"><stop offset="0" stop-color="#e6e6ea"/><stop offset="0.45" stop-color="#f4f4f6"/><stop offset="1" stop-color="#dedee2"/></linearGradient></defs>
      <path d="M2 12 L14 100 C15 105 20 108 28 108 H59 C67 108 72 105 73 100 L85 12 Z" fill="url(#trg)"/>
      <ellipse cx="43.5" cy="12" rx="41.5" ry="10.5" fill="#f6f4f6"/>
      <ellipse cx="43.5" cy="13" rx="38" ry="8.5" fill="#f0d8e6"/></svg><div style="position:absolute;left:664.5px;top:1578.5px;width:8px;height:8px;border-radius:50%;background:#1a1450"></div><div style="position:absolute;left:1700px;top:1578.5px;width:8px;height:8px;border-radius:50%;background:#5a1070"></div>
</body></html>
